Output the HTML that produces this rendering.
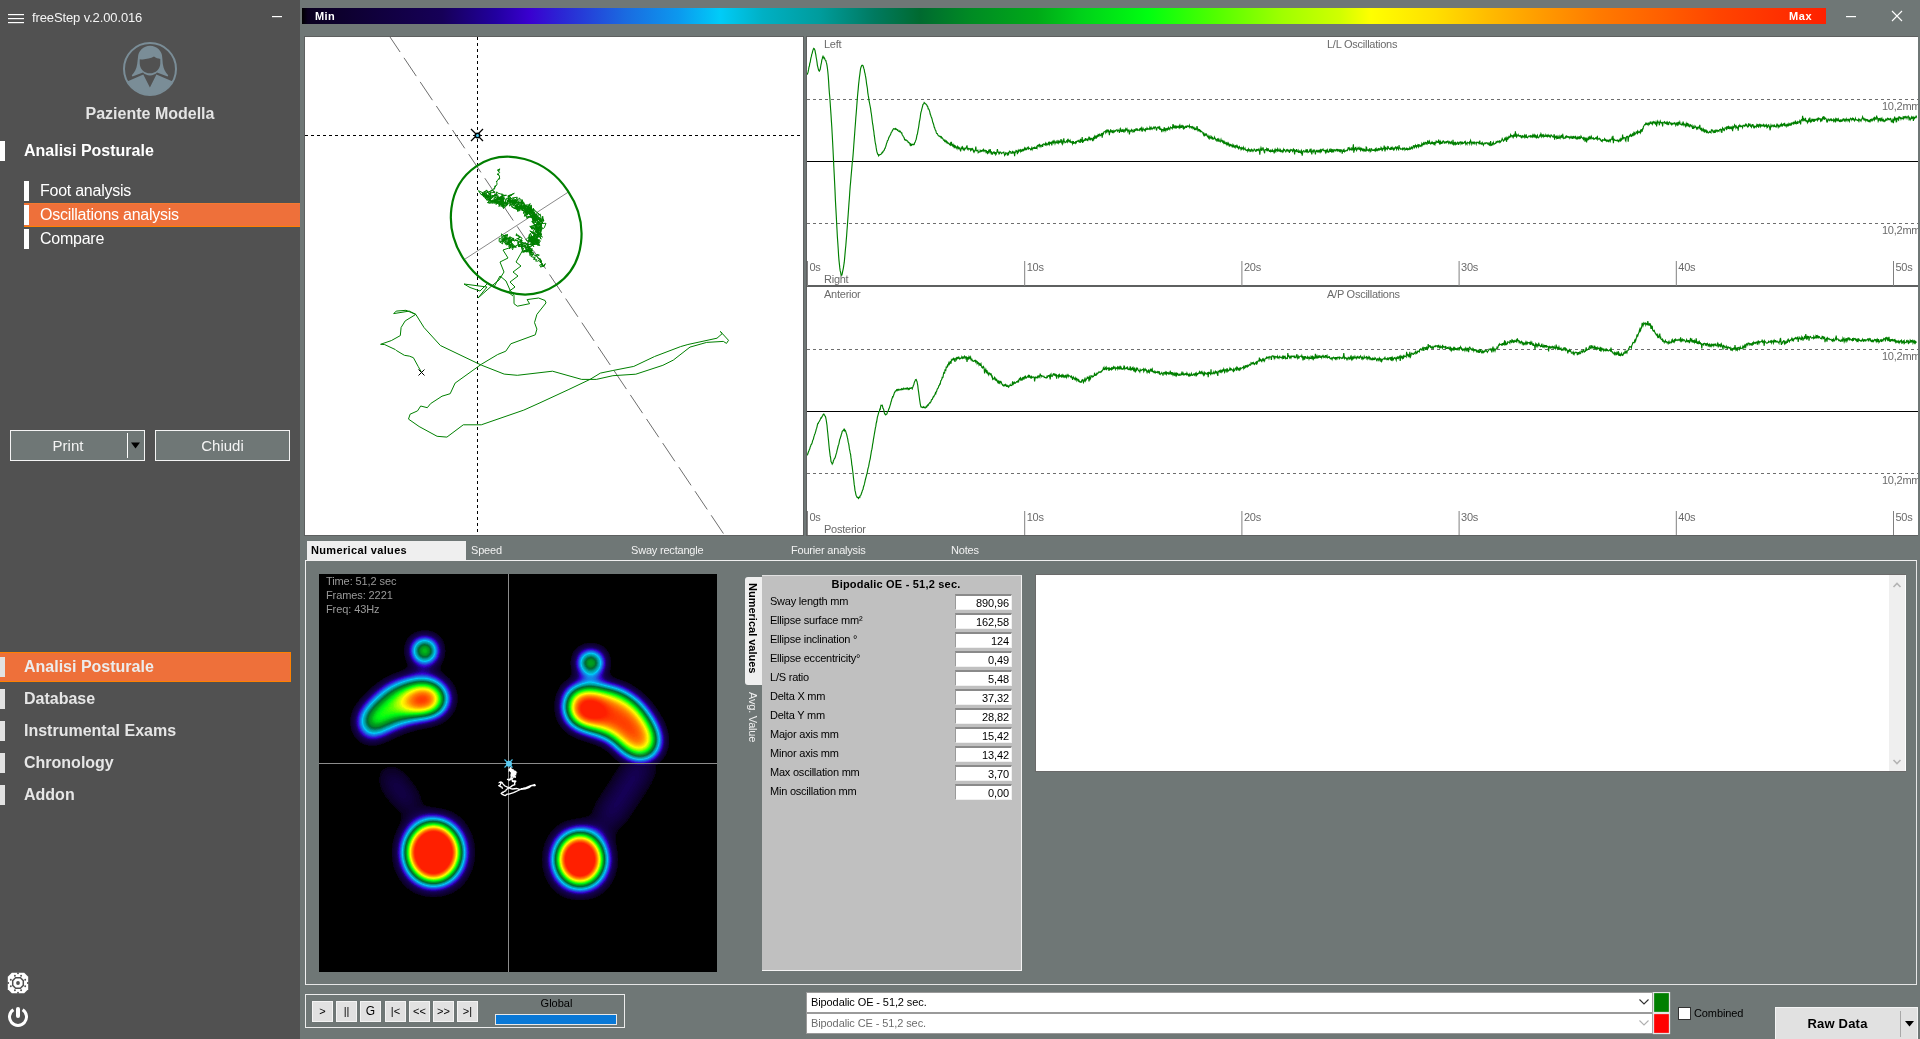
<!DOCTYPE html>
<html><head><meta charset="utf-8">
<style>
*{box-sizing:border-box;margin:0;padding:0}
html,body{width:1920px;height:1039px;overflow:hidden;background:#6f7776;font-family:"Liberation Sans",sans-serif}
.a{position:absolute}
#side{left:0;top:0;width:300px;height:1039px;background:#515151}
.st{color:#fff;white-space:nowrap;line-height:1}
.ct{font-family:"Liberation Sans",sans-serif;font-size:11px;fill:#6a6a6a;letter-spacing:-0.25px}
.tab{font-size:11px;color:#f2f2f2;white-space:nowrap;letter-spacing:-0.2px;line-height:1}
.lbl{font-size:11px;color:#000;white-space:nowrap;letter-spacing:-0.22px;line-height:1}
.vb{position:absolute;left:955px;width:57px;height:16px;background:#fff;border-top:2px solid #8a8a8a;border-left:1px solid #9a9a9a;border-right:1px solid #f0f0f0;border-bottom:1px solid #f0f0f0;font-size:11px;text-align:right;padding-right:2px;line-height:15px;letter-spacing:-0.1px;color:#000}
.pb{position:absolute;top:1001px;width:21px;height:21px;background:#e1e1e1;border:1px solid #f4f4f4;font-size:11px;text-align:center;line-height:19px;color:#000}
</style></head><body>
<!-- sidebar -->
<div id="side" class="a">
  <svg class="a" style="left:0;top:0" width="300" height="1039">
    <rect x="8" y="14" width="16" height="1.2" fill="#fff"/>
    <rect x="8" y="18" width="16" height="1.2" fill="#fff"/>
    <rect x="8" y="22" width="16" height="1.2" fill="#fff"/>
    <rect x="272" y="16" width="10" height="1.2" fill="#fff"/>
    <!-- avatar -->
    <circle cx="150" cy="69" r="26" fill="none" stroke="#7a8d97" stroke-width="2"/>
    <clipPath id="avc"><circle cx="150" cy="69" r="25.8"/></clipPath>
    <g clip-path="url(#avc)" fill="#7a8d97">
      <path d="M116,86.5 L128.4,81 L143.3,74.4 L149.9,87.6 L156.4,74.4 L171.6,81 L184,86.5 L184,100 L116,100 Z"/>
    </g>
    <path fill="#7a8d97" d="M137.9,58 A12.2,12.2 0 0 1 162.3,58 L162.8,64 C163.5,69 165.5,72.5 168.2,75.3 L167.6,76.6 L157,72.6 C155.5,74.5 152.8,75.4 150,75.4 C147.2,75.4 144.5,74.5 143,72.6 L132.4,76.6 L131.8,75.3 C134.5,72.5 136.5,69 137.2,64 Z"/>
    <path fill="#515151" d="M139.7,59.2 C144,59.8 150,59 154,56.6 C156,58 158,58.8 160.3,58.9 L160.3,63.2 C160.3,69 155.7,73.3 150,73.3 C144.3,73.3 139.7,69 139.7,63.2 Z"/>
    <!-- gear -->
    <path fill="#fff" d="M11.8,972.8 L24.2,972.8 L28.2,976.8 L28.2,989.2 L24.2,993.2 L11.8,993.2 L7.8,989.2 L7.8,976.8 Z"/>
    <g fill="#515151"><circle cx="14.9" cy="975.8" r="0.95"/><circle cx="21.1" cy="975.8" r="0.95"/><circle cx="25.2" cy="979.8" r="0.95"/><circle cx="25.2" cy="986.2" r="0.95"/><circle cx="21.1" cy="990.2" r="0.95"/><circle cx="14.9" cy="990.2" r="0.95"/><circle cx="10.8" cy="986.2" r="0.95"/><circle cx="10.8" cy="979.8" r="0.95"/><circle cx="8.2" cy="983" r="0.95"/><circle cx="27.8" cy="983" r="0.95"/><circle cx="18" cy="973.2" r="0.95"/><circle cx="18" cy="992.8" r="0.95"/></g>
    <path d="M15.6,977.7 L20.4,977.7 L23.3,980.6 L23.3,985.4 L20.4,988.3 L15.6,988.3 L12.7,985.4 L12.7,980.6 Z" fill="none" stroke="#515151" stroke-width="1.5"/>
    <circle cx="18" cy="983" r="1.9" fill="#515151"/>
    <!-- power -->
    <g fill="none" stroke="#fff" stroke-width="3">
      <path d="M13.4,1009.8 A8.5,8.5 0 1 0 22.6,1009.8"/>
    </g>
    <line x1="18" y1="1009" x2="18" y2="1016" stroke="#fff" stroke-width="4" stroke-linecap="round"/>
  </svg>
  <div class="a st" style="left:32px;top:11px;font-size:13px;color:#f4f4f4;letter-spacing:-0.12px">freeStep v.2.00.016</div>
  <div class="a st" style="left:0;top:106px;width:300px;text-align:center;font-size:16px;font-weight:bold;color:#e4e4e4;padding-left:0px">Paziente Modella</div>
  <div class="a" style="left:0;top:141px;width:5px;height:20px;background:#fff"></div>
  <div class="a st" style="left:24px;top:143px;font-size:16px;font-weight:bold">Analisi Posturale</div>
  <div class="a" style="left:24px;top:181px;width:5px;height:20px;background:#fff"></div>
  <div class="a st" style="left:40px;top:183px;font-size:16px;letter-spacing:-0.25px">Foot analysis</div>
  <div class="a" style="left:24px;top:203px;width:276px;height:24px;background:#ee703a;border-bottom:1px solid #ff8000;border-top:1px solid #f57a30"></div>
  <div class="a" style="left:24px;top:205px;width:5px;height:20px;background:#fff"></div>
  <div class="a st" style="left:40px;top:207px;font-size:16px;letter-spacing:-0.25px">Oscillations analysis</div>
  <div class="a" style="left:24px;top:229px;width:5px;height:20px;background:#fff"></div>
  <div class="a st" style="left:40px;top:231px;font-size:16px;letter-spacing:-0.25px">Compare</div>

  <div class="a" style="left:10px;top:430px;width:135px;height:31px;border:1px solid #f4f4f4;background:#6f7776"></div>
  <div class="a" style="left:127px;top:433px;width:1px;height:25px;background:#fff"></div>
  <svg class="a" style="left:130px;top:442px" width="12" height="8"><path d="M1,0.5 L10,0.5 L5.5,6.5 Z" fill="#000"/></svg>
  <div class="a st" style="left:10px;top:438px;width:116px;text-align:center;font-size:15px;color:#f4f4f4">Print</div>
  <div class="a" style="left:155px;top:430px;width:135px;height:31px;border:1px solid #f4f4f4;background:#6f7776"></div>
  <div class="a st" style="left:155px;top:438px;width:135px;text-align:center;font-size:15px;color:#f4f4f4">Chiudi</div>

  <div class="a" style="left:0;top:652px;width:291px;height:30px;background:#ee703a;border:1px solid #ff8000;border-left:none"></div>
  <div class="a" style="left:0;top:657px;width:5px;height:20px;background:#e2e2e2"></div>
  <div class="a st" style="left:24px;top:659px;font-size:16px;font-weight:bold;color:#ececec">Analisi Posturale</div>
  <div class="a" style="left:0;top:689px;width:5px;height:20px;background:#e2e2e2"></div>
  <div class="a st" style="left:24px;top:691px;font-size:16px;font-weight:bold;color:#e6e6e6">Database</div>
  <div class="a" style="left:0;top:721px;width:5px;height:20px;background:#e2e2e2"></div>
  <div class="a st" style="left:24px;top:723px;font-size:16px;font-weight:bold;color:#e6e6e6">Instrumental Exams</div>
  <div class="a" style="left:0;top:753px;width:5px;height:20px;background:#e2e2e2"></div>
  <div class="a st" style="left:24px;top:755px;font-size:16px;font-weight:bold;color:#e6e6e6">Chronology</div>
  <div class="a" style="left:0;top:785px;width:5px;height:20px;background:#e2e2e2"></div>
  <div class="a st" style="left:24px;top:787px;font-size:16px;font-weight:bold;color:#e6e6e6">Addon</div>
</div>

<!-- colour bar -->
<div class="a" style="left:302px;top:8px;width:1524px;height:16px;background:linear-gradient(90deg,#000000 0.00%, #0a0020 0.39%, #160058 9.19%, #2200a0 12.73%, #3a00d0 14.96%, #2c24d4 16.93%, #1a6ae0 21.19%, #0c98ee 24.67%, #00ccf8 27.43%, #00b0c4 30.25%, #009c9c 33.99%, #007a60 37.53%, #006a30 40.55%, #008a24 43.77%, #00aa18 48.23%, #00d01a 51.05%, #00ff10 55.51%, #50ff00 59.91%, #a0ff00 64.37%, #d0ff00 68.11%, #ffff00 70.14%, #ffe000 74.34%, #ffbb00 77.89%, #ff9a00 81.43%, #ff7a00 85.17%, #ff6000 89.11%, #ff4400 93.04%, #ff2c00 97.77%, #ff2000 100.00%)"></div>
<div class="a st" style="left:315px;top:11px;font-size:11px;font-weight:bold;letter-spacing:0.4px">Min</div>
<div class="a st" style="left:1789px;top:11px;font-size:11px;font-weight:bold;letter-spacing:0.6px">Max</div>
<svg class="a" style="left:1840px;top:5px" width="80" height="25">
  <rect x="6" y="11" width="10" height="1.2" fill="#fff"/>
  <path d="M52,6 L62,16 M62,6 L52,16" stroke="#fff" stroke-width="1.1"/>
</svg>

<!-- top plots -->
<svg class="a" style="left:0;top:0" width="1920" height="540">
  <rect x="304" y="36" width="500" height="500" fill="#5e6060"/>
  <rect x="806" y="36" width="1112" height="500" fill="#5e6060"/>
  <rect x="807" y="37" width="1111" height="248" fill="#fff"/>
  <rect x="807" y="287" width="1111" height="248" fill="#fff"/>
  <clipPath id="stabclip"><rect x="305" y="37" width="498" height="498"/></clipPath>
  <g clip-path="url(#stabclip)">
<rect x="305" y="37" width="498" height="498" fill="#fff"/>
<line x1="477.5" y1="37" x2="477.5" y2="535" stroke="#000" stroke-dasharray="3 3"/>
<line x1="305" y1="135.5" x2="803" y2="135.5" stroke="#000" stroke-dasharray="3 3"/>
<line x1="390" y1="37" x2="724.4" y2="535" stroke="#6e6e6e" stroke-dasharray="22 7" stroke-dashoffset="3.9"/>
<line x1="464.6" y1="259.3" x2="568.6" y2="191.9" stroke="#8a8a8a"/>
<ellipse cx="516.2" cy="225.6" rx="71.5" ry="62.3" transform="rotate(56 516.2 225.6)" fill="none" stroke="#007f00" stroke-width="2.2"/>
<path d="M421.6,372.5 L418.3,366.7 L413.4,357.7 L409.3,356.1 L404.4,355.3 L396.2,350.4 L395.4,349.6 L384.7,344.6 L380.6,344.3 L391.3,340.6 L400.3,335.6 L401.1,327.5 L405.2,320.9 L415.8,314.4 L409.3,311.1 L393.7,313.6 L396.2,311.1 L406,310.3 L415.8,314.4 L424,327.5 L440.4,345.5 L481.3,365.1 L504.2,374.1 L517.3,375.3 L552.5,371.2 L581.7,379.4 L596.3,379.4 L612.9,375.7 L635.8,374.2 L662.9,365.3 L673.3,360.1 L690,347.1 L706.7,342.4 L723.3,341.4 L726.5,343.4 L728.5,340.3 L722.3,333.5 L720.2,331.5 L722.3,333.5 L717,338.2 L687.9,344.5 L680.6,346.6 L654.6,356.5 L633.8,366.4 L612.9,370.5 L600.4,373.1 L590,379.4 L568.1,389.8 L540,402.8 L523.8,410.1 L481.3,424.8 L463.3,424.8 L446.9,437.1 L437.1,436.3 L419.1,426.5 L408.5,419.1 L410.1,414.2 L417.5,410.9 L420.7,406 L427.3,407.7 L430.6,403.6 L442,396.2 L450.2,393.7 L455.1,383.1 L481.3,364.3 L497.7,354.5 L505.8,351.2 L510.8,343.8 L535.3,334.8 L536.9,329.1 L534.5,322.6 L536.9,314.4 L546,302.9 L545.1,300.5 L538.6,298 L527.1,299.6 L529.6,303.7 L517.3,306.2 L514,303.7 L514,295.5 L510,290 L506,281 L500,276 L494,287 L488,283 L480,291 L470,287.5 L464,284 L487,287 L478,298 L491,286.5 L499,280 L504,272 L500,262 L508,258 L503,250 L512,247" fill="none" stroke="#008000" stroke-width="1"/>
<path d="M498.6,169.9 L498.6,170.8 L497.3,170.2 L498.9,169.3 L499.9,168.9 L498.5,171.4 L498.9,172 L498.9,171.5 L499.7,172.6 L498.3,173.4 L497.1,174.3 L498.9,175 L498.3,174.9 L498.3,174.1 L499.5,176.1 L499.5,178.1 L499.8,178.8 L498.5,179.3 L499.2,178.4 L498.2,179.3 L496.8,181.3 L496.9,181.8 L496.4,181 L496.6,182.3 L497,182.8 L496.9,184.5 L497,185 L496.2,185.4 L495.9,185.1 L495.3,187.2 L495,186.6 L494.7,186.3 L494.6,188.4 L494.9,188.9 L494.8,188.8 L494,188.8 L493.9,188.2 L494,189.4 L493.7,189.7 L493.5,189.7 L487.4,192.5 L485.5,194.2 L484.5,191.1 L481.3,194.8 L478.4,190.7 L483.1,192.9 L482.2,194.4 L483.6,195.9 L481.9,194.4 L484.2,195.8 L486.7,194.2 L487.3,198.2 L488.4,199.3 L490.6,197.9 L489,196.9 L483.5,196.7 L483.7,195.6 L485.2,194.1 L481.3,194.7 L485.1,193.2 L483.4,196.3 L487,195.4 L488.4,198.7 L491.1,199.9 L490.1,201.2 L487.8,198.6 L489.5,195.9 L487.7,197.3 L483,194.1 L488,192.1 L486.5,189.9 L482.8,195.4 L486.1,196.4 L486.4,194 L485.8,198.3 L488.7,196 L487.5,195.2 L489.5,196.6 L484.5,197.6 L488.7,201.1 L490.3,196.9 L488.4,195.7 L486.2,194.8 L486.1,198.1 L486.5,200.1 L488,199.4 L490.3,199 L495.2,194.1 L493.3,196.2 L489.9,196.4 L490.7,192.6 L490,193.3 L488.7,194.4 L490.5,192.4 L491.4,190 L495.2,192.2 L490.2,193 L489.8,193.1 L486.1,190.4 L489.6,194.7 L494.6,196 L490.8,198.9 L490.2,193.6 L487.9,196 L490.6,194 L489.8,198.1 L496.3,194.4 L497.9,198.3 L496.5,198.2 L494.7,197.1 L495.1,203.5 L495,198.8 L495.8,202.9 L495.6,201.8 L489.9,200.2 L489.8,199.1 L491,202.7 L488.8,203.2 L488.5,201.9 L490.1,200.5 L487.4,202.6 L492.2,203 L491.7,201.1 L497.9,199.5 L490.9,201.8 L498.5,202.6 L499.6,202.8 L492.7,203 L492.2,203.2 L495.9,200 L491.9,202 L493.5,198.8 L496.9,199.8 L498,198.1 L496.7,195.9 L495.9,194.8 L494.9,197 L499.2,199.3 L500.7,196.9 L498.7,199.6 L497.7,194.6 L495.8,195.8 L496.8,191.8 L497.4,193 L501.8,194.3 L502.7,197.6 L499.2,199.5 L500,197.3 L498.1,197.1 L503.3,199.1 L502.2,199.2 L501.5,201.1 L500.3,204.4 L501.7,202.1 L501.6,200.4 L501.4,198.9 L502.2,196.5 L495.7,199.2 L497.7,202.9 L501.5,195.8 L498.6,199.9 L503.6,200.1 L501.8,193.8 L503.5,194.9 L503.2,194.8 L501.4,198.3 L496.2,201.5 L499.9,201.5 L498.6,202.2 L503,199 L498.1,202.6 L495.8,204.3 L500,202.3 L499.7,202.5 L496.1,203 L497.1,201 L497.8,198.7 L501.3,198.4 L500.7,199.9 L500.5,197.7 L502.9,196 L503.1,195.7 L506.5,195.3 L504.1,195.3 L503.5,198.1 L502.9,199.6 L503,199.6 L502.8,205 L502.8,205.2 L498.8,203.6 L498.6,202.3 L504.3,205.2 L504,201.9 L502,199.9 L504.3,197.7 L503,201.1 L501.2,200.9 L500.6,200.8 L502.3,201.1 L503.3,200.3 L500.6,198.2 L501.4,198.1 L501.6,200.8 L502.9,201.7 L500.5,202.7 L499.1,200.7 L504.3,205.7 L502.8,202.9 L502.5,202.9 L502.9,204.6 L503,207.2 L502,204.8 L503.5,208.6 L503,202.9 L507.4,205.1 L507.9,203.7 L504.8,207.6 L501.6,201.8 L503.1,202.2 L502.1,203.1 L499,206.6 L500,202.3 L501.4,200 L504.9,202.4 L501.1,206.7 L501.9,203.3 L498.6,203.9 L499.3,205.6 L501.9,203.9 L502.7,201.9 L499.5,198.1 L505.2,198.9 L506.1,205.9 L502.8,204.9 L502.9,202.6 L503.2,202.7 L504.3,202.4 L507.3,204 L504.6,202.8 L508.2,203.7 L505.6,202.3 L507.1,204.8 L507.4,200.5 L508.9,200.6 L510.5,202.7 L508.2,203.3 L506.3,198.4 L510.1,198.3 L509.5,202.7 L512.2,207 L512.4,207.2 L511.6,207 L513.8,204.7 L514.7,203 L515.4,201.1 L513.7,199.6 L511.2,202.3 L508.1,199.4 L507,202.2 L511.3,200.9 L509.1,195.3 L511.6,195.4 L507.9,196.8 L514.3,193.3 L509.1,195.5 L508.6,201 L508.1,195.4 L513.7,200.4 L512.5,202.4 L513.2,202.4 L509.5,206 L510.6,201.9 L507.8,201.7 L515,200 L512.4,204.8 L510.4,204.6 L512.4,201.5 L513.1,202.4 L516.9,198.4 L518,199.7 L512.2,202.4 L513.6,204.3 L515.3,201.1 L512,204.1 L513.8,202.5 L511.3,200.3 L513.6,206 L519.7,204.3 L520.3,206.5 L518.1,206.5 L521.1,206.1 L520.9,199.5 L519,197.9 L519,203.8 L516.3,201 L513.1,200.1 L511.3,200.2 L511.1,202.2 L510.6,201.5 L509.4,199.3 L508.7,200.1 L514.5,200.6 L510,200.2 L511.7,202.4 L515.2,205 L515,208.9 L517.3,207.1 L515,206.2 L517.8,205.8 L516.8,205.5 L517.6,205.7 L518.6,201.7 L518.3,201.2 L512.3,198 L517.3,197.2 L516.6,198.6 L517.2,198.9 L516,203.6 L513.8,202.1 L515,201.8 L518.4,206.7 L515.7,206.4 L515.2,206.7 L515.3,206.8 L519.8,207.8 L518,206.1 L517.7,204.1 L519.7,202.9 L522.9,201.5 L522,199.5 L521,203.4 L515.8,201.3 L521.4,207.3 L518.3,207 L517,206.1 L518,209.6 L516.8,206.5 L515.1,202.7 L519.8,202.5 L515.4,205.9 L520,208.3 L519,208.2 L518.1,206.4 L517.1,208.8 L512.4,207.4 L518.4,210.1 L515.8,206.9 L514.9,207.2 L518.8,206.5 L521.3,210.1 L523.3,209 L520.6,207.4 L516.7,207.5 L517.9,211.7 L518.9,206.8 L521.6,204.3 L521.8,208.4 L524.1,205.4 L528.1,206.4 L530.1,203.5 L527.6,209.8 L525,210.2 L523.7,205.7 L526.6,209.5 L519.5,206.5 L520,210.8 L518.5,210.4 L524.8,204.3 L521.7,202.2 L521.4,207.8 L520.4,206.4 L526.9,205.8 L524.8,208.7 L522.7,209 L525.5,206.1 L523.2,206.5 L523.4,206.9 L521.5,209.8 L525,212.1 L521,207.7 L521.1,207.2 L521.7,205.7 L523.4,204.8 L522.5,201.4 L520.7,204.8 L524.6,209.1 L519.8,208.1 L523.5,201.9 L525.4,206.6 L528.6,206.5 L528.2,206.2 L530.9,207.8 L529.8,204.9 L523.2,205.1 L524.5,206.6 L523.1,206.5 L522.3,209.7 L525.8,212.5 L524.3,208.1 L526.4,208.8 L525.3,207.2 L524.3,208.9 L525.3,213.3 L528.5,209.7 L532.2,212.2 L525.8,210.4 L526.2,210.8 L527.6,215.2 L526.2,210.7 L529.3,211.9 L530.8,209.4 L525.7,205.9 L529.5,209.9 L529.6,206.9 L525.5,212.2 L529.7,214.4 L531.6,214.9 L527,212 L527.8,207.3 L528.3,205.9 L531,209.7 L527,209.2 L531.2,208.2 L531.5,211.4 L531.1,204.9 L532.1,212.1 L531.4,212.2 L531.4,207.9 L530.6,212.8 L532.1,210.1 L528.1,209.8 L533.2,213.4 L527.8,208.4 L529.5,208.3 L530.9,211.3 L528.8,211.2 L529.5,214.5 L533,216.5 L534,213.6 L534,215.5 L527.8,217.6 L527.1,218.6 L526.1,215.4 L523,212.8 L526.7,211.2 L529,208.5 L532.8,211.4 L532.4,210.7 L533,209.2 L535.2,211.7 L532.5,214.8 L530.1,211.7 L527.7,206.8 L525.1,209.4 L528.5,208.2 L529.6,208.4 L532.7,209.8 L532.6,211.8 L525.9,211.6 L524.4,216.2 L528.2,212.6 L523.3,208.1 L528.2,207.9 L525.8,210.7 L526.7,214 L525.3,216.3 L527.9,213.3 L530.8,213 L530.7,211.8 L527.5,212.4 L531.4,207 L529.9,211.1 L532.9,210.2 L533.9,215.8 L532.4,211.4 L530,212.3 L536,215.7 L533.8,212.9 L532,218.4 L533.5,217.1 L532.6,220.5 L537.8,220.7 L532.5,218.1 L534.9,218.5 L534.2,220.9 L535.1,220 L533.5,214.8 L535.2,214.4 L533.2,217.3 L536.9,217.8 L535.2,218.1 L535.5,216 L530.4,217.4 L534.4,217.4 L532.9,215.1 L537.4,213.9 L539.8,214.6 L534.8,210.5 L533.1,208.1 L533.8,211.1 L532.9,215.1 L527,217.1 L531.2,216.5 L530.1,214.7 L531,210.8 L528.9,212.4 L532.9,212.3 L534.9,214 L533.7,214.5 L535.3,219.8 L533.3,220.7 L534,215.2 L533.5,219.3 L534.7,219.3 L532.3,217.1 L536,219 L537,219.5 L535.4,222.6 L536.1,217 L536,220.5 L535.5,219.6 L534.9,219.3 L539.2,222 L534.7,218.5 L536.2,213.8 L539.5,220.3 L537.2,216.3 L534.8,219.3 L535.4,216.9 L539.7,217.6 L542.3,219.9 L542.7,216.2 L543.4,221.5 L541.8,223 L539.8,221.1 L538.2,218.2 L541.4,221 L544,220.4 L543.3,219.2 L536.6,224.5 L541.7,225.2 L540.4,221.1 L541.1,219.7 L541.6,221.4 L542.8,221.2 L536.9,215.5 L535.5,215.6 L533.8,219.5 L541.2,218.8 L540.3,214.2 L538.3,216 L531.9,217.7 L540.1,219.9 L535.8,219.9 L539.5,222.5 L536.9,223 L536.2,223.6 L541.3,224.8 L537.8,223.9 L540.1,220 L539.7,218.5 L541.9,222.1 L543.1,223.2 L538.2,218.4 L532.7,220.1 L531.9,214.5 L536.2,222.6 L537.6,222.9 L536.7,226.2 L534.7,229.2 L535.6,225.1 L534.5,227.2 L537.1,228.7 L535.4,226.7 L537.6,224.5 L534.2,224.7 L535.5,226.4 L532.7,220.9 L532,222 L531.9,221.3 L533.4,222.3 L534.3,220.2 L535.1,222.8 L532.4,222.5 L534.3,224.6 L535.5,224.8 L530.2,226.5 L532.1,229.4 L531.3,227.2 L534,227 L529.8,226.4 L536.6,229.7 L536.7,225.9 L537.2,224.1 L534.7,225 L540.2,228.2 L541.4,225 L538,227.8 L538.8,229.1 L536.2,229.5 L539.1,229.5 L535.6,231 L533.9,227.5 L531.1,228.4 L539.1,229.6 L535.6,225.7 L536,225.9 L541.3,223.3 L537.2,230 L539.3,228 L537.6,221.7 L540.7,223.7 L537.4,222.9 L538.3,222 L540.7,223.9 L541.7,226.9 L539.6,226.4 L543.5,228.5 L544.1,227.7 L544.3,227.7 L546,223.3 L538.9,223.6 L541.1,224.5 L538.2,231.3 L537.3,231.5 L540.4,226.4 L539.5,226.2 L540.1,227.5 L540.5,223.9 L540.7,228.8 L542.6,228.7 L540.7,229.5 L540.3,229 L541.1,230.4 L540.7,232.4 L541.4,228.8 L536.4,232.6 L542.5,237 L539.2,233.8 L537.3,232.2 L535,231.2 L537.7,232.8 L541.1,234.2 L540.3,230.5 L539.7,226.5 L540.4,228.6 L537,227 L538.2,231.1 L538.4,226.7 L539.1,232.9 L536.1,231.9 L540.1,232.1 L541.2,229.2 L538.3,230.8 L537.2,230 L535.9,231.5 L539,237 L541.4,235.1 L538.3,231.7 L538.5,237.1 L537,236.7 L539.8,233.7 L541.8,234.2 L539.1,236.3 L541.1,239.2 L539.4,234 L540.5,231.5 L535.9,228 L535.8,226.8 L532.2,233.1 L535.4,234.1 L539.5,236.6 L535.2,234.5 L534.8,232.1 L531,232.5 L534.9,234.4 L529.8,230.9 L534,232.9 L533.5,236.2 L535.8,236.3 L533.5,236.8 L535.2,238.9 L537.9,235.2 L537.7,232 L534.7,233.3 L535.1,235.3 L537.9,237.5 L534.7,235 L541.1,233.6 L538.5,234.2 L534.2,236.1 L533.9,239.8 L536.8,239.3 L536.8,242.1 L536.1,241.7 L537.2,241.7 L539.2,240 L540.5,240.9 L538.2,243.5 L535.7,238.5 L537.8,239.8 L539.2,242.3 L532.5,243.2 L528.8,239.9 L529.4,234.4 L528.9,239 L533.5,237.4 L528.5,240.5 L531.6,241.8 L532.5,236.6 L531.8,240.4 L532.9,240.2 L538.9,240.5 L536.7,241.2 L530.8,237.8 L532.5,238.7 L530.2,237.5 L529.5,237.4 L529.2,237.9 L535.6,235.1 L534.4,237.4 L532.2,237 L530.3,233.1 L529.6,240.4 L533.4,239.8 L531.2,236 L534.2,239.2 L534,237.4 L533,239 L535.4,242.6 L533.1,240.4 L535.6,238.8 L535.2,241 L535.1,243.3 L536,242.4 L538,245.6 L539.2,242.9 L538.7,240.5 L536.1,237.6 L535.3,239.8 L538.5,239.9 L536.9,238.1 L533.7,238.9 L538.3,237.1 L534.2,238.1 L534.2,238.8 L531.5,241.6 L532,241.1 L527.9,241.3 L530.2,238.8 L533.4,242 L533,238.5 L537.1,239.6 L535.6,242.3 L539.6,240.1 L532.1,240.7 L538,243.6 L531.4,245.1 L534.5,240.8 L531.7,243.7 L532.7,238.9 L530.2,238.6 L528.9,239.8 L531.2,237.4 L530.2,240.4 L534.4,244.4 L535.2,240.8 L531.8,238.1 L535.7,242.4 L534.6,240.1 L532.9,243.6 L535.1,243.7 L539.8,245.6 L538.2,242.5 L537.3,243.5 L533.7,244.6 L531.9,245.4 L529.9,244.2 L530.4,244.1 L531.7,242.2 L530,242.1 L525.8,239.8 L528.1,237.4 L533,236.5 L531.4,239.7 L531.1,240.1 L532.1,237.9 L529.7,240.4 L527.1,244.2 L527.9,245 L525.9,248.5 L525.9,249.1 L524.6,243.3 L525.5,243.6 L521.8,242.5 L523.6,243 L521.1,246.9 L527.7,244.4 L531.1,244.8 L532.2,245.2 L533.9,246.8 L531.9,243.8 L532.9,241.4 L532,244.2 L534.1,244 L532.2,246 L531.7,246.3 L529,246.6 L528.2,249.7 L529,248.7 L525.8,242.9 L524.7,242.6 L527.7,244.5 L530.5,248.8 L526.8,247.4 L527,247.6 L529.6,247.5 L531.4,249.7 L531.3,252.1 L526.8,251.7 L529.8,247.1 L531.5,250.9 L531.9,248.3 L531.8,251.1 L527.3,249 L529.8,250.7 L532.7,250.3 L527.2,251.3 L527.3,251.2 L524.3,251.9 L525.1,250.2 L522.3,252 L524.2,252.1 L525.9,249.3 L529.8,248.7 L529,250.4 L523.7,251.8 L522.6,251.4 L521.3,246.7 L525,246.2 L527.1,247.6 L529.7,246.7 L527,246.6 L526.5,250.3 L529.4,250.2 L529.8,249.4 L531,251.4 L529.9,251 L529.1,251.4 L530,254.4 L531,253.9 L532.4,254.5 L529.9,255.1 L529.8,255.4 L530.1,253.7 L531.5,252.1 L532.3,251.8 L531.9,254.3 L533.5,254.3 L535.6,256.1 L535.3,255.6 L536.2,256.2 L535.4,255.4 L537.4,254.5 L537.8,255.4 L539.3,255.1 L537,254.7 L536.1,255.8 L537.6,257 L538.1,258.6 L540.4,258.8 L541,260.9 L541.6,261.3 L539.6,261.7 L540.3,260.7 L540.5,262.8 L540.8,262.3 L541.9,263.8 L541.9,264.3 L539.6,265.1 L540.3,266.1 L540.7,267.2 L543.1,265.8 L543.8,265.7 L545.3,263.6 L544.1,266.3 L542.8,266.4 L542.1,266.4 L541.9,266.3 L542.4,263.9 L542.1,264 L541.7,265.3 L543.4,266 L541.5,263.2 L541.3,262.4 L541.6,262 L540.7,260 L540.1,259.3 L537.7,261.3 L537.5,261 L535.6,261.1 L536.7,259.6 L535.1,259.2 L534,257.6 L534,260 L535.1,257.3 L532,257 L530.7,256 L532.3,256 L532.6,255.5 L532.6,254.5 L531.6,255.1 L533.6,254.3 L533.6,252.7 L530.4,252.8 L531.4,253.1 L531.5,252.6 L529.8,251 L531.3,251.3 L530.5,253.2 L530.3,251.5 L528.1,249.9 L526.4,249.5 L526.4,252.1 L527.2,251.5 L526,250.1 L527.4,252 L526.7,250.4 L525.5,250.4 L523,251.2 L520.5,240 L522.2,240.4 L522.1,241.4 L521.1,240.8 L521.4,240 L520.9,241.4 L518.2,238.2 L520.4,237 L517.8,234.8 L516.1,235.8 L516.5,233.7 L516.5,234.5 L516.7,234.7 L518.2,236.7 L519.6,236.6 L522.2,238.2 L519.3,241.7 L515.4,239.9 L516.6,238.7 L519,238.4 L517.3,240.9 L512.7,239.8 L510.9,240.2 L511.2,240.7 L511.8,241.3 L509.1,241 L512.8,239.7 L514.3,241.3 L513.2,238.3 L513.2,238.1 L509.9,240.8 L511.4,241.9 L509,240.4 L508.3,240.2 L510.8,237.4 L514.1,238.9 L512,240.6 L511.3,238.7 L508.9,237.6 L508.7,240.4 L508.3,243.6 L510.2,245.3 L508.7,243.2 L509,240.1 L511.2,239.8 L511.9,240.1 L510.4,241 L509.1,237.1 L510.4,236.8 L509.9,238.3 L505.1,237.8 L507.5,234.4 L506.6,239.4 L506.9,240.2 L508.8,242.9 L509.4,240.6 L505.4,238.9 L509.5,238.7 L504.6,238.4 L503.6,235.6 L507.5,235 L505,235 L506.4,237.5 L505.2,237.4 L501.5,233.8 L502,237.4 L501.9,237.7 L503.6,235.4 L505,235.8 L505.4,239.9 L501.9,240.6 L504.9,238.9 L503.4,239.9 L503.3,242.2 L505.1,240.2 L505.3,238 L503.4,240.2 L504.7,240.2 L505.7,238.2 L501.6,237.8 L503.7,240.4 L504.7,240.5 L500.2,241.3 L502.7,241.2 L502.5,241 L502.1,241.8 L502.7,243.9 L499.1,241.5 L499.3,238.2 L503.5,240.1 L503.4,238.2 L505.7,241 L505.6,241.5 L503.1,240.1 L503.4,241.2 L504.1,242.5 L506.9,244.2 L504.7,242.3 L506.3,240.5 L506.5,241 L505.3,244.2 L506.7,243.9 L509.4,242.7 L506.7,242.3 L506.6,244.2 L508.6,240.8 L511.4,241.3 L508.5,244.7 L510.3,245.6 L508.6,246.3 L510.6,245.3 L508.5,245.2 L511.6,240.4 L506.8,245.1 L511.3,241.9 L512.1,244.9 L511.8,243 L508.4,242.9 L509.9,241.2 L513.5,244.9 L511.8,244.8 L510.8,244.1 L509.6,248.9 L509.9,246.4 L511.1,246.3 L511.4,246.5 L516.5,247 L512,246.1 L509.4,244.4 L515.3,246.5 L513.2,247.7 L512.6,249.8 L512,248.2 L514.1,245.4 L515.3,247.4 L515.8,245.6 L517.9,245.1 L518.1,244.2 L518.4,242 L521.2,242.3 L521,239.6 L521.3,243.5 L518.3,246.1 L518.9,245.6 L518.6,246.3 L518,246.6 L520.4,246.4 L522.4,247.3 L518.5,245 L520.1,244.1 L523,245.1 L522.9,242.5 L519.4,245.6 L517.9,241.7 L518.2,245.1 L519.7,246.6 L523.2,244 L521.9,246.2 L522.4,246.2 L525.3,245.5 L520,255 L516,262 L521,266 L513,272 L518,276 L510,282 L515,287 L508,292 L513,296" fill="none" stroke="#008000" stroke-width="1" stroke-linejoin="bevel"/>
<path d="M418.5,369.5 L424.5,375.5 M424.5,369.5 L418.5,375.5" stroke="#000" stroke-width="1"/>
<path d="M471,129 L483,141 M483,129 L471,141" stroke="#000" stroke-width="1.3"/>
<circle cx="477.5" cy="135.5" r="3" fill="#000"/><circle cx="477.5" cy="135.5" r="1.5" fill="#4cc8f0"/>
  </g>
  <clipPath id="chclip"><rect x="807" y="37" width="1111" height="498"/></clipPath>
  <g clip-path="url(#chclip)">
<line x1="807" y1="99.5" x2="1918" y2="99.5" stroke="#6e6e6e" stroke-dasharray="3 3"/>
<line x1="807" y1="223.5" x2="1918" y2="223.5" stroke="#6e6e6e" stroke-dasharray="3 3"/>
<line x1="807" y1="161.5" x2="1918" y2="161.5" stroke="#000" stroke-width="1"/>
<line x1="807.5" y1="261" x2="807.5" y2="286" stroke="#808080"/>
<text x="809.5" y="271" class="ct">0s</text>
<line x1="1024.7" y1="261" x2="1024.7" y2="286" stroke="#808080"/>
<text x="1026.7" y="271" class="ct">10s</text>
<line x1="1241.9" y1="261" x2="1241.9" y2="286" stroke="#808080"/>
<text x="1243.9" y="271" class="ct">20s</text>
<line x1="1459.1" y1="261" x2="1459.1" y2="286" stroke="#808080"/>
<text x="1461.1" y="271" class="ct">30s</text>
<line x1="1676.3" y1="261" x2="1676.3" y2="286" stroke="#808080"/>
<text x="1678.3" y="271" class="ct">40s</text>
<line x1="1893.5" y1="261" x2="1893.5" y2="286" stroke="#808080"/>
<text x="1895.5" y="271" class="ct">50s</text>
<text x="1882" y="110" class="ct">10,2mm</text>
<text x="1882" y="234" class="ct">10,2mm</text>
<text x="824" y="48" class="ct">Left</text>
<text x="824" y="283" class="ct">Right</text>
<text x="1327" y="48" class="ct">L/L Oscillations</text>
<path d="M807,74.7 L807.4,73.8 L807.8,73 L808.2,71.4 L808.6,69.4 L809,67 L809.4,66 L809.8,63.2 L810.2,62.3 L810.6,59.7 L811,57.7 L811.4,56.4 L811.8,54.1 L812.2,53.2 L812.6,51.3 L813,50.1 L813.4,49 L813.8,48.4 L814.2,48.7 L814.6,49.4 L815,50.3 L815.4,52.8 L815.8,54.7 L816.2,57.5 L816.6,59.5 L817,62.2 L817.4,65.3 L817.8,66.9 L818.2,68.6 L818.6,70.1 L819,70.8 L819.4,71.1 L819.8,70.1 L820.2,69.4 L820.6,67 L821,64.5 L821.4,62.9 L821.8,60.2 L822.2,58.9 L822.6,57.3 L823,56.4 L823.4,57.6 L823.8,57.3 L824.2,58.6 L824.6,58.3 L825,59.4 L825.4,60.3 L825.8,60.5 L826.2,62.2 L826.6,63.3 L827,65.3 L827.4,68.2 L827.8,71.5 L828.2,75.7 L828.6,81.1 L829,87.9 L829.4,93.3 L829.8,97.2 L830.2,103.3 L830.6,109.1 L831,114.6 L831.4,121.1 L831.8,127 L832.2,134.3 L832.6,141.8 L833,149.5 L833.4,157.6 L833.8,166.2 L834.2,173.9 L834.6,182.3 L835,190.4 L835.4,199.9 L835.8,207.4 L836.2,214.5 L836.6,222.2 L837,229.7 L837.4,237.2 L837.8,242.8 L838.2,248.8 L838.6,255.5 L839,260.4 L839.4,264.1 L839.8,267.9 L840.2,270.9 L840.6,272.2 L841,274.6 L841.4,275.1 L841.8,275.1 L842.2,273.8 L842.6,271.7 L843,269.8 L843.4,267.8 L843.8,265.1 L844.2,262.7 L844.6,258.6 L845,254.1 L845.4,249.5 L845.8,245.8 L846.2,240.6 L846.6,236 L847,230.2 L847.4,225.3 L847.8,219.6 L848.2,214.2 L848.6,208.6 L849,202.9 L849.4,198 L849.8,191.8 L850.2,186.3 L850.6,182.3 L851,177.2 L851.4,172.8 L851.8,168.1 L852.2,163.2 L852.6,160.4 L853,155.9 L853.4,150.7 L853.8,145 L854.2,139.6 L854.6,134.5 L855,128.8 L855.4,123.8 L855.8,118 L856.2,113.4 L856.6,108.3 L857,102.9 L857.4,97.5 L857.8,93.1 L858.2,89.1 L858.6,84.4 L859,81 L859.4,77.4 L859.8,74.6 L860.2,71.4 L860.6,68.6 L861,67.3 L861.4,66.3 L861.8,65.4 L862.2,65.2 L862.6,65.4 L863,65.7 L863.4,67 L863.8,68.4 L864.2,69.5 L864.6,72.1 L865,73.4 L865.4,75.7 L865.8,77.6 L866.2,80.5 L866.6,83.8 L867,86.2 L867.4,88.5 L867.8,92.6 L868.2,95.2 L868.6,97.3 L869,100.7 L869.4,102.3 L869.8,104.5 L870.2,106.5 L870.6,108.7 L871,111.8 L871.4,114 L871.8,117.2 L872.2,120.5 L872.6,123.7 L873,125.7 L873.4,129.1 L873.8,131.3 L874.2,135.2 L874.6,137.7 L875,141 L875.4,143.5 L875.8,145 L876.2,147.9 L876.6,150.3 L877,152 L877.4,153.3 L877.8,154.3 L878.2,154.6 L878.6,155.7 L879,154.8 L879.4,155.1 L879.8,154.8 L880.2,154.5 L880.6,154.4 L881,154.3 L881.4,153.8 L881.8,153.1 L882.2,152.4 L882.6,152.7 L883,151.7 L883.4,150.9 L883.8,150.7 L884.2,150.2 L884.6,148.8 L885,148.6 L885.4,147.3 L885.8,146.2 L886.2,144.8 L886.6,143.2 L887,142.6 L887.4,140.9 L887.8,140.5 L888.2,139.7 L888.6,138.1 L889,137.4 L889.4,136.3 L889.8,136 L890.2,135.1 L890.6,134.6 L891,133.1 L891.4,132.2 L891.8,131.8 L892.2,131.1 L892.6,130.1 L893,129.8 L893.4,128.8 L893.8,128.6 L894.2,128.8 L894.6,129 L895,129.3 L895.4,128.5 L895.8,128.6 L896.2,129.4 L896.6,129.4 L897,129.7 L897.4,130.3 L897.8,129.9 L898.2,130.6 L898.6,131.1 L899,131.5 L899.4,131.7 L899.8,130.9 L900.2,131.4 L900.6,132 L901,132.3 L901.4,133.1 L901.8,133 L902.2,134.8 L902.6,135.3 L903,135.7 L903.4,136.8 L903.8,137.2 L904.2,138 L904.6,139.7 L905,139.5 L905.4,140 L905.8,140.3 L906.2,140 L906.6,140.3 L907,140.9 L907.4,140.9 L907.8,141.3 L908.2,142.3 L908.6,142.3 L909,142.9 L909.4,142.8 L909.8,143.5 L910.2,145 L910.6,144.2 L911,145.2 L911.4,144.5 L911.8,145.2 L912.2,144.6 L912.6,144.3 L913,144.1 L913.4,144.6 L913.8,144.8 L914.2,144.4 L914.6,142.8 L915,142.4 L915.4,141.4 L915.8,140.1 L916.2,139.2 L916.6,137.2 L917,135 L917.4,134.1 L917.8,131.7 L918.2,129.3 L918.6,127.5 L919,124.7 L919.4,121.6 L919.8,119.8 L920.2,117.5 L920.6,114.2 L921,112.1 L921.4,110.9 L921.8,109.2 L922.2,107.7 L922.6,106.1 L923,104.4 L923.4,104.1 L923.8,103.8 L924.2,102.6 L924.6,103 L925,103.2 L925.4,103.8 L925.8,103.9 L926.2,104.4 L926.6,105.1 L927,105.2 L927.4,106.6 L927.8,106.7 L928.2,108.9 L928.6,108.8 L929,109.6 L929.4,110.6 L929.8,111.9 L930.2,114 L930.6,114.9 L931,116.2 L931.4,117.2 L931.8,118.2 L932.2,119.7 L932.6,121.6 L933,122.7 L933.4,123.8 L933.8,125.2 L934.2,127.2 L934.6,127.5 L935,129.1 L935.4,130.1 L935.8,130.5 L936.2,132.4 L936.6,133.4 L937,133.7 L937.4,133.6 L937.8,134.7 L938.2,135.4 L938.6,135.9 L939,135.9 L939.4,136.2 L939.8,136.6 L940.2,136.4 L940.6,136.5 L941,137.5 L941.4,136.9 L941.8,138 L942.2,137.9 L942.6,138.1 L943,138.9 L943.4,139.8 L943.8,140.2 L944.2,140 L944.6,141.1 L945,140.4 L945.4,141.4 L945.8,141.1 L946.2,142.3 L946.6,141.3 L947,142 L947.4,142.1 L947.8,143.3 L948.2,142.9 L948.6,143.5 L949,143.8 L949.4,144.4 L949.8,144.7 L950.2,143.5 L950.6,144.9 L951,144.1 L951.4,141.9 L951.8,145.8 L952.2,144 L952.6,145.5 L953,144.8 L953.4,147.2 L953.8,144.6 L954.2,146.9 L954.6,146.1 L955,147.3 L955.4,146.1 L955.8,146.6 L956.2,147.6 L956.6,147.4 L957,148.6 L957.4,146.5 L957.8,147.2 L958.2,148 L958.6,147.4 L959,148.9 L959.4,148.6 L959.8,148 L960.2,149.6 L960.6,151.5 L961,148.9 L961.4,148.2 L961.8,147.4 L962.2,149.2 L962.6,147.1 L963,147.7 L963.4,150.3 L963.8,148.6 L964.2,148.7 L964.6,149.7 L965,148.3 L965.4,148.6 L965.8,148 L966.2,147.3 L966.6,148.4 L967,145.3 L967.4,149.6 L967.8,147.9 L968.2,149.5 L968.6,148.6 L969,148.4 L969.4,148.6 L969.8,149.1 L970.2,148.8 L970.6,150.2 L971,149 L971.4,148.7 L971.8,149.8 L972.2,149.2 L972.6,148.7 L973,149.8 L973.4,151.1 L973.8,149.8 L974.2,151.9 L974.6,151 L975,151 L975.4,150.2 L975.8,146.6 L976.2,149.9 L976.6,150.9 L977,150.8 L977.4,150.4 L977.8,150.2 L978.2,152.7 L978.6,152.2 L979,151.9 L979.4,152 L979.8,152.1 L980.2,150.2 L980.6,150.7 L981,151.4 L981.4,150.7 L981.8,151.1 L982.2,150.6 L982.6,150.2 L983,150.9 L983.4,149.4 L983.8,150.1 L984.2,151.1 L984.6,150.2 L985,150.2 L985.4,150.2 L985.8,151.6 L986.2,150 L986.6,152.3 L987,152.9 L987.4,151.2 L987.8,153.2 L988.2,152.5 L988.6,151 L989,152.2 L989.4,150.7 L989.8,151.3 L990.2,149.1 L990.6,151.7 L991,153 L991.4,151.3 L991.8,152.9 L992.2,154.2 L992.6,154 L993,152.6 L993.4,152.1 L993.8,152.6 L994.2,152.2 L994.6,153.6 L995,153.6 L995.4,152.2 L995.8,154.6 L996.2,154 L996.6,152.9 L997,151.6 L997.4,149 L997.8,151.7 L998.2,152.4 L998.6,152.3 L999,154 L999.4,153.8 L999.8,152 L1000.2,152 L1000.6,152.1 L1001,152.5 L1001.4,153.6 L1001.8,153.4 L1002.2,152.9 L1002.6,152.8 L1003,152.5 L1003.4,152.7 L1003.8,152.2 L1004.2,153.4 L1004.6,155.3 L1005,154.5 L1005.4,154.6 L1005.8,152.7 L1006.2,153 L1006.6,153.3 L1007,153.7 L1007.4,155.5 L1007.8,154.1 L1008.2,152.2 L1008.6,154.1 L1009,153.1 L1009.4,151.3 L1009.8,151.8 L1010.2,151.6 L1010.6,151.7 L1011,153.3 L1011.4,153.2 L1011.8,153.2 L1012.2,152.1 L1012.6,150.8 L1013,153.1 L1013.4,153 L1013.8,152.9 L1014.2,151.5 L1014.6,156.2 L1015,152.2 L1015.4,152.3 L1015.8,151.2 L1016.2,150 L1016.6,152.2 L1017,150.9 L1017.4,154.2 L1017.8,151.6 L1018.2,150.4 L1018.6,151.7 L1019,150.8 L1019.4,150.2 L1019.8,150.7 L1020.2,150 L1020.6,151.2 L1021,149.3 L1021.4,151.3 L1021.8,151.1 L1022.2,150.1 L1022.6,150.6 L1023,149 L1023.4,150.7 L1023.8,150.6 L1024.2,149.3 L1024.6,148.3 L1025,150.2 L1025.4,148.2 L1025.8,148 L1026.2,149.7 L1026.6,149.3 L1027,149.2 L1027.4,148.1 L1027.8,147.3 L1028.2,147 L1028.6,148.9 L1029,148.4 L1029.4,148.2 L1029.8,148.6 L1030.2,148.7 L1030.6,149.9 L1031,149.8 L1031.4,148.7 L1031.8,147.7 L1032.2,149.4 L1032.6,148.2 L1033,148 L1033.4,147.7 L1033.8,148.3 L1034.2,147.6 L1034.6,148.9 L1035,146.9 L1035.4,148.3 L1035.8,148.5 L1036.2,148.5 L1036.6,147.1 L1037,148 L1037.4,145.6 L1037.8,145.4 L1038.2,145.3 L1038.6,146 L1039,144.6 L1039.4,144.4 L1039.8,146.2 L1040.2,145.4 L1040.6,145.2 L1041,146.6 L1041.4,145.6 L1041.8,145.3 L1042.2,144.9 L1042.6,146.8 L1043,144.6 L1043.4,144 L1043.8,144.1 L1044.2,144.2 L1044.6,144.5 L1045,144.9 L1045.4,143.4 L1045.8,144.9 L1046.2,144.6 L1046.6,143.8 L1047,145 L1047.4,144.3 L1047.8,143.8 L1048.2,144.2 L1048.6,141.9 L1049,143.2 L1049.4,144.3 L1049.8,142.1 L1050.2,142.3 L1050.6,143.3 L1051,143 L1051.4,142.5 L1051.8,145.4 L1052.2,142.9 L1052.6,141.8 L1053,141.1 L1053.4,142.8 L1053.8,142 L1054.2,141.1 L1054.6,142.1 L1055,143.6 L1055.4,142.3 L1055.8,142.6 L1056.2,141.4 L1056.6,142.5 L1057,142.2 L1057.4,142.8 L1057.8,141.1 L1058.2,141.9 L1058.6,142.9 L1059,140.8 L1059.4,141.2 L1059.8,142.2 L1060.2,141.6 L1060.6,141.9 L1061,139.2 L1061.4,140.6 L1061.8,142.7 L1062.2,141.6 L1062.6,144 L1063,143 L1063.4,141.7 L1063.8,138.2 L1064.2,141.5 L1064.6,141.5 L1065,142.7 L1065.4,142.5 L1065.8,142.1 L1066.2,141.5 L1066.6,140.9 L1067,141.7 L1067.4,140.4 L1067.8,141.6 L1068.2,139.9 L1068.6,140.8 L1069,140.3 L1069.4,140.7 L1069.8,142.3 L1070.2,140.7 L1070.6,142.2 L1071,141.8 L1071.4,142 L1071.8,142.6 L1072.2,142 L1072.6,143.8 L1073,142.6 L1073.4,141.2 L1073.8,143.3 L1074.2,143.2 L1074.6,142.5 L1075,142.4 L1075.4,143.1 L1075.8,141 L1076.2,143.3 L1076.6,141.3 L1077,141.1 L1077.4,141.4 L1077.8,141.1 L1078.2,140.4 L1078.6,140.8 L1079,141.9 L1079.4,141.9 L1079.8,140.8 L1080.2,142.9 L1080.6,138.9 L1081,140.5 L1081.4,141 L1081.8,141.4 L1082.2,137 L1082.6,142.9 L1083,141.9 L1083.4,140.5 L1083.8,141 L1084.2,140.3 L1084.6,139.8 L1085,140.9 L1085.4,138.2 L1085.8,140.3 L1086.2,138.5 L1086.6,140.3 L1087,138.5 L1087.4,140.3 L1087.8,140.6 L1088.2,139 L1088.6,138.8 L1089,136.5 L1089.4,139.8 L1089.8,138.7 L1090.2,140.5 L1090.6,137.9 L1091,139.2 L1091.4,138.8 L1091.8,138.5 L1092.2,139.4 L1092.6,141.1 L1093,138.7 L1093.4,137.9 L1093.8,139.3 L1094.2,137.7 L1094.6,136.6 L1095,139 L1095.4,136.6 L1095.8,137.1 L1096.2,135.6 L1096.6,137.8 L1097,137.3 L1097.4,135.2 L1097.8,136.8 L1098.2,134.5 L1098.6,134.8 L1099,135.8 L1099.4,134.4 L1099.8,135 L1100.2,135.3 L1100.6,135.6 L1101,135 L1101.4,133.6 L1101.8,133.9 L1102.2,137.6 L1102.6,132.9 L1103,134.5 L1103.4,133.8 L1103.8,132.1 L1104.2,131.7 L1104.6,131.7 L1105,131.5 L1105.4,131 L1105.8,132.8 L1106.2,131.8 L1106.6,130.7 L1107,131.7 L1107.4,130.1 L1107.8,130.5 L1108.2,131.3 L1108.6,130.6 L1109,132.2 L1109.4,135.2 L1109.8,130.7 L1110.2,132.4 L1110.6,129.4 L1111,131.6 L1111.4,131.9 L1111.8,131.5 L1112.2,130.2 L1112.6,132.6 L1113,132.7 L1113.4,131.5 L1113.8,130.7 L1114.2,132 L1114.6,131.5 L1115,130.8 L1115.4,131.1 L1115.8,130.3 L1116.2,130 L1116.6,130 L1117,129.7 L1117.4,131.3 L1117.8,130.9 L1118.2,130.6 L1118.6,130.7 L1119,129.8 L1119.4,132.9 L1119.8,130.4 L1120.2,131.6 L1120.6,128.9 L1121,129.9 L1121.4,131.2 L1121.8,130.6 L1122.2,131.9 L1122.6,129.9 L1123,130.3 L1123.4,131.4 L1123.8,130.3 L1124.2,131.5 L1124.6,130.3 L1125,129.8 L1125.4,130.7 L1125.8,128.9 L1126.2,129.6 L1126.6,130 L1127,128.9 L1127.4,130.3 L1127.8,131.4 L1128.2,129.7 L1128.6,131.4 L1129,129.5 L1129.4,134.4 L1129.8,131.4 L1130.2,131.6 L1130.6,130.8 L1131,130.3 L1131.4,131 L1131.8,129.7 L1132.2,130.3 L1132.6,130.5 L1133,131.9 L1133.4,131.4 L1133.8,131.5 L1134.2,129.2 L1134.6,131.2 L1135,130.5 L1135.4,130.4 L1135.8,129.2 L1136.2,129.7 L1136.6,129 L1137,129.9 L1137.4,129.3 L1137.8,130.3 L1138.2,130 L1138.6,130.1 L1139,129.8 L1139.4,130.3 L1139.8,128.3 L1140.2,129.8 L1140.6,127.8 L1141,129.5 L1141.4,128.1 L1141.8,129.4 L1142.2,131.7 L1142.6,129.5 L1143,128.2 L1143.4,129.2 L1143.8,129.5 L1144.2,130.4 L1144.6,129.7 L1145,129.2 L1145.4,130.4 L1145.8,128.9 L1146.2,129.2 L1146.6,129.4 L1147,128 L1147.4,129.1 L1147.8,128.6 L1148.2,129.1 L1148.6,128.9 L1149,129.1 L1149.4,129.1 L1149.8,127.6 L1150.2,129.2 L1150.6,128.5 L1151,127.6 L1151.4,129.4 L1151.8,127.6 L1152.2,129 L1152.6,128.2 L1153,128.2 L1153.4,128.1 L1153.8,127.3 L1154.2,128.5 L1154.6,127.8 L1155,126.9 L1155.4,126.8 L1155.8,127.4 L1156.2,129 L1156.6,130.5 L1157,127.9 L1157.4,127.7 L1157.8,127.1 L1158.2,127.1 L1158.6,128 L1159,127.2 L1159.4,128.5 L1159.8,127.5 L1160.2,129.4 L1160.6,129.5 L1161,129 L1161.4,129.1 L1161.8,132.1 L1162.2,130.3 L1162.6,129.4 L1163,129.3 L1163.4,129.9 L1163.8,130.7 L1164.2,127.2 L1164.6,130.9 L1165,128.7 L1165.4,129.4 L1165.8,130.6 L1166.2,128.6 L1166.6,128.7 L1167,129.5 L1167.4,127.9 L1167.8,129.6 L1168.2,129.2 L1168.6,127.7 L1169,128.8 L1169.4,128.5 L1169.8,129.3 L1170.2,127.8 L1170.6,127.1 L1171,127.7 L1171.4,127.6 L1171.8,128.3 L1172.2,128.8 L1172.6,127.1 L1173,124 L1173.4,128.2 L1173.8,126.2 L1174.2,127.1 L1174.6,125.5 L1175,127.9 L1175.4,128 L1175.8,126.1 L1176.2,126.5 L1176.6,127.6 L1177,126.5 L1177.4,127.3 L1177.8,127.2 L1178.2,126.4 L1178.6,127 L1179,127.8 L1179.4,126 L1179.8,125.2 L1180.2,127.7 L1180.6,127.2 L1181,126.3 L1181.4,127.8 L1181.8,126.1 L1182.2,126.4 L1182.6,125.9 L1183,128 L1183.4,128.7 L1183.8,126.6 L1184.2,127.3 L1184.6,128.2 L1185,127.5 L1185.4,126.6 L1185.8,126.3 L1186.2,127.4 L1186.6,127.4 L1187,126.1 L1187.4,126 L1187.8,125.8 L1188.2,126.6 L1188.6,126.6 L1189,126.8 L1189.4,125.5 L1189.8,127.2 L1190.2,126.4 L1190.6,126.6 L1191,126.7 L1191.4,128.3 L1191.8,126.7 L1192.2,126.5 L1192.6,127 L1193,128.5 L1193.4,128 L1193.8,127.4 L1194.2,128.8 L1194.6,127.6 L1195,130 L1195.4,128.7 L1195.8,129.4 L1196.2,129.7 L1196.6,128.9 L1197,126.1 L1197.4,128.2 L1197.8,130.2 L1198.2,129.3 L1198.6,129.8 L1199,131.4 L1199.4,129.1 L1199.8,130.4 L1200.2,131.4 L1200.6,130.8 L1201,131.7 L1201.4,131.4 L1201.8,131.5 L1202.2,132.2 L1202.6,132.8 L1203,132.8 L1203.4,134.3 L1203.8,133.5 L1204.2,135.5 L1204.6,134.7 L1205,136 L1205.4,133.9 L1205.8,134 L1206.2,134.9 L1206.6,134.3 L1207,135.2 L1207.4,136.6 L1207.8,136.3 L1208.2,137.2 L1208.6,137.9 L1209,136 L1209.4,136.8 L1209.8,138.5 L1210.2,137.7 L1210.6,137.8 L1211,136.2 L1211.4,136.8 L1211.8,138.6 L1212.2,138.9 L1212.6,136.9 L1213,138.6 L1213.4,138.9 L1213.8,139 L1214.2,138.6 L1214.6,137.2 L1215,138.4 L1215.4,138.7 L1215.8,140 L1216.2,139.6 L1216.6,139.5 L1217,141.7 L1217.4,139.2 L1217.8,138.8 L1218.2,139.8 L1218.6,141.5 L1219,139.5 L1219.4,140.4 L1219.8,141.2 L1220.2,141.8 L1220.6,140.7 L1221,139.4 L1221.4,141.1 L1221.8,140.9 L1222.2,140.5 L1222.6,141.8 L1223,141.2 L1223.4,142.7 L1223.8,141.5 L1224.2,141.3 L1224.6,143.4 L1225,143.7 L1225.4,143.5 L1225.8,142.7 L1226.2,143.7 L1226.6,143.1 L1227,144.7 L1227.4,143.8 L1227.8,145.2 L1228.2,143 L1228.6,143.8 L1229,145.3 L1229.4,144.7 L1229.8,146.1 L1230.2,145.7 L1230.6,144.5 L1231,144.6 L1231.4,145.6 L1231.8,145.5 L1232.2,146.9 L1232.6,146.9 L1233,144.6 L1233.4,145.2 L1233.8,146.8 L1234.2,146.5 L1234.6,147.1 L1235,145.5 L1235.4,145.6 L1235.8,147.3 L1236.2,146.2 L1236.6,146 L1237,144.7 L1237.4,148 L1237.8,146.8 L1238.2,147.3 L1238.6,149.3 L1239,147.3 L1239.4,146.6 L1239.8,148 L1240.2,148 L1240.6,147.8 L1241,149.3 L1241.4,147.9 L1241.8,148.7 L1242.2,148 L1242.6,148.8 L1243,148.7 L1243.4,147.5 L1243.8,149.6 L1244.2,149 L1244.6,148.9 L1245,148.1 L1245.4,149.8 L1245.8,149.7 L1246.2,150.3 L1246.6,150.5 L1247,150.1 L1247.4,149.8 L1247.8,151.3 L1248.2,150.5 L1248.6,149.1 L1249,150.1 L1249.4,149.7 L1249.8,150.6 L1250.2,152 L1250.6,150.1 L1251,149.7 L1251.4,149.3 L1251.8,150.7 L1252.2,149.9 L1252.6,150.2 L1253,151.3 L1253.4,150.4 L1253.8,150.1 L1254.2,149 L1254.6,149.2 L1255,150 L1255.4,151.1 L1255.8,151.3 L1256.2,151.1 L1256.6,149 L1257,150.6 L1257.4,150.4 L1257.8,149.6 L1258.2,149.5 L1258.6,150.2 L1259,149.2 L1259.4,150.3 L1259.8,154.7 L1260.2,150.6 L1260.6,149.3 L1261,147.6 L1261.4,148.8 L1261.8,150.8 L1262.2,149 L1262.6,149.1 L1263,147.5 L1263.4,149.2 L1263.8,150.5 L1264.2,151.6 L1264.6,153.3 L1265,149.7 L1265.4,149.6 L1265.8,149.6 L1266.2,149.9 L1266.6,148.9 L1267,151.2 L1267.4,149.4 L1267.8,150.1 L1268.2,148.4 L1268.6,150 L1269,150.2 L1269.4,151.3 L1269.8,151.3 L1270.2,150.7 L1270.6,151.4 L1271,149.7 L1271.4,151.4 L1271.8,151.2 L1272.2,151.3 L1272.6,150.1 L1273,151.2 L1273.4,150.8 L1273.8,151.3 L1274.2,153.3 L1274.6,150.3 L1275,149.3 L1275.4,151 L1275.8,151.7 L1276.2,149.7 L1276.6,149.9 L1277,150.4 L1277.4,149.1 L1277.8,150.9 L1278.2,150.4 L1278.6,150.8 L1279,149.6 L1279.4,151.3 L1279.8,149.6 L1280.2,151.9 L1280.6,150.1 L1281,151.3 L1281.4,150.6 L1281.8,151 L1282.2,152 L1282.6,150.9 L1283,151.5 L1283.4,149.5 L1283.8,150.7 L1284.2,150 L1284.6,149.7 L1285,150.6 L1285.4,151.3 L1285.8,151.9 L1286.2,151 L1286.6,149.9 L1287,150.5 L1287.4,149.9 L1287.8,151.4 L1288.2,149.6 L1288.6,151.6 L1289,150.3 L1289.4,152.9 L1289.8,150.4 L1290.2,149.7 L1290.6,150.7 L1291,149.9 L1291.4,149.8 L1291.8,149.7 L1292.2,150.8 L1292.6,151.5 L1293,150.7 L1293.4,149.1 L1293.8,149.6 L1294.2,151.1 L1294.6,154.4 L1295,150.7 L1295.4,151.4 L1295.8,150.7 L1296.2,151 L1296.6,149.2 L1297,151.7 L1297.4,151.7 L1297.8,151.7 L1298.2,150.6 L1298.6,152.3 L1299,152.3 L1299.4,151.1 L1299.8,150.9 L1300.2,152.4 L1300.6,152.4 L1301,152.9 L1301.4,150.4 L1301.8,151.3 L1302.2,155.6 L1302.6,153.2 L1303,151.5 L1303.4,150.8 L1303.8,150.5 L1304.2,151.3 L1304.6,151.9 L1305,151.7 L1305.4,151.4 L1305.8,150.4 L1306.2,152.4 L1306.6,150.7 L1307,151.7 L1307.4,149.3 L1307.8,151.5 L1308.2,152 L1308.6,152.3 L1309,151.8 L1309.4,151 L1309.8,150.1 L1310.2,151.3 L1310.6,150 L1311,148.7 L1311.4,151.6 L1311.8,154.4 L1312.2,151.6 L1312.6,151.3 L1313,149.8 L1313.4,151.5 L1313.8,150.1 L1314.2,150 L1314.6,151.2 L1315,152 L1315.4,154.5 L1315.8,151.6 L1316.2,150.6 L1316.6,151.2 L1317,150.8 L1317.4,151.8 L1317.8,152 L1318.2,150.6 L1318.6,151.1 L1319,151.9 L1319.4,150.4 L1319.8,150.2 L1320.2,151.7 L1320.6,150.1 L1321,151 L1321.4,152.2 L1321.8,149.7 L1322.2,150 L1322.6,149.8 L1323,149.2 L1323.4,150.5 L1323.8,150.2 L1324.2,150.2 L1324.6,150.5 L1325,151.3 L1325.4,152.3 L1325.8,149.8 L1326.2,151.8 L1326.6,150.6 L1327,151.5 L1327.4,149.9 L1327.8,151 L1328.2,151.9 L1328.6,152.3 L1329,151.9 L1329.4,149.9 L1329.8,150.7 L1330.2,149.8 L1330.6,152 L1331,150.2 L1331.4,149.7 L1331.8,152.8 L1332.2,149.3 L1332.6,150.4 L1333,152.1 L1333.4,150.6 L1333.8,151.4 L1334.2,149.7 L1334.6,150 L1335,150.4 L1335.4,150.2 L1335.8,150.8 L1336.2,149.5 L1336.6,149.4 L1337,149.9 L1337.4,150.7 L1337.8,149.5 L1338.2,149.6 L1338.6,150.8 L1339,151 L1339.4,151.4 L1339.8,149.5 L1340.2,149.5 L1340.6,151.5 L1341,150.8 L1341.4,150.9 L1341.8,149.5 L1342.2,153.6 L1342.6,151.3 L1343,150.7 L1343.4,150 L1343.8,151.8 L1344.2,150.2 L1344.6,151.7 L1345,151.1 L1345.4,151.1 L1345.8,150.6 L1346.2,150.9 L1346.6,150.6 L1347,150.1 L1347.4,150.5 L1347.8,149.5 L1348.2,147.3 L1348.6,148.5 L1349,148.4 L1349.4,149.6 L1349.8,148.1 L1350.2,148.8 L1350.6,149.7 L1351,149.8 L1351.4,150 L1351.8,147.9 L1352.2,148.2 L1352.6,149.2 L1353,147.4 L1353.4,144.3 L1353.8,152.6 L1354.2,147.9 L1354.6,150 L1355,149.3 L1355.4,147.6 L1355.8,147.4 L1356.2,149.5 L1356.6,150.4 L1357,149.3 L1357.4,147.8 L1357.8,149.5 L1358.2,147.7 L1358.6,148.3 L1359,149.2 L1359.4,149.3 L1359.8,148.1 L1360.2,149.7 L1360.6,150.4 L1361,147.6 L1361.4,149.2 L1361.8,148.8 L1362.2,150.3 L1362.6,150.6 L1363,148.5 L1363.4,149.9 L1363.8,150.8 L1364.2,149.2 L1364.6,149.2 L1365,150.9 L1365.4,150.7 L1365.8,151.1 L1366.2,147.1 L1366.6,147.4 L1367,150.2 L1367.4,149.9 L1367.8,150.3 L1368.2,149.9 L1368.6,150.9 L1369,150.7 L1369.4,148.9 L1369.8,148.8 L1370.2,151.5 L1370.6,150.6 L1371,150.9 L1371.4,148.7 L1371.8,149 L1372.2,149.9 L1372.6,150.3 L1373,150.3 L1373.4,149.9 L1373.8,150.4 L1374.2,150.4 L1374.6,149.7 L1375,150.7 L1375.4,149.2 L1375.8,150.2 L1376.2,148.8 L1376.6,150.2 L1377,149.7 L1377.4,150.3 L1377.8,149 L1378.2,148.7 L1378.6,149.8 L1379,149 L1379.4,149.8 L1379.8,149 L1380.2,149.5 L1380.6,149.3 L1381,147.7 L1381.4,148.7 L1381.8,147.6 L1382.2,151.2 L1382.6,148.9 L1383,148.7 L1383.4,149 L1383.8,148.3 L1384.2,145.5 L1384.6,148.7 L1385,151.4 L1385.4,147.8 L1385.8,147.4 L1386.2,148.8 L1386.6,148.4 L1387,148.7 L1387.4,149.3 L1387.8,146.5 L1388.2,146.7 L1388.6,148.4 L1389,148.6 L1389.4,148.9 L1389.8,149.3 L1390.2,148 L1390.6,150 L1391,147.5 L1391.4,147.6 L1391.8,149.7 L1392.2,147.5 L1392.6,148.4 L1393,149 L1393.4,148.4 L1393.8,150.1 L1394.2,149.7 L1394.6,148.1 L1395,147.7 L1395.4,147.1 L1395.8,148.1 L1396.2,147.6 L1396.6,149.3 L1397,147.9 L1397.4,147.2 L1397.8,148.3 L1398.2,149 L1398.6,149.6 L1399,145.2 L1399.4,148.2 L1399.8,148 L1400.2,148.2 L1400.6,149.2 L1401,149 L1401.4,148.8 L1401.8,148.9 L1402.2,149.5 L1402.6,148.4 L1403,149.2 L1403.4,148.4 L1403.8,148.9 L1404.2,148.4 L1404.6,148.1 L1405,149.9 L1405.4,149.2 L1405.8,149.3 L1406.2,148.5 L1406.6,149.9 L1407,148 L1407.4,149.6 L1407.8,149 L1408.2,148.7 L1408.6,149.6 L1409,149.7 L1409.4,148.8 L1409.8,147.7 L1410.2,149.2 L1410.6,149.2 L1411,148.2 L1411.4,147.3 L1411.8,148.3 L1412.2,148.8 L1412.6,146.9 L1413,148.3 L1413.4,145.7 L1413.8,145.8 L1414.2,145.8 L1414.6,147.4 L1415,146.3 L1415.4,145.3 L1415.8,147 L1416.2,145.1 L1416.6,147.3 L1417,146.6 L1417.4,145.7 L1417.8,145 L1418.2,146.2 L1418.6,146.9 L1419,144.1 L1419.4,145.7 L1419.8,146.2 L1420.2,146.1 L1420.6,145.6 L1421,146.3 L1421.4,145.4 L1421.8,143.8 L1422.2,145.3 L1422.6,144.5 L1423,143.9 L1423.4,143.3 L1423.8,145.2 L1424.2,143.1 L1424.6,143.9 L1425,144.1 L1425.4,142.4 L1425.8,142.7 L1426.2,142.6 L1426.6,143.9 L1427,144.2 L1427.4,142.1 L1427.8,140.5 L1428.2,142.1 L1428.6,143.9 L1429,142.5 L1429.4,141.3 L1429.8,143 L1430.2,143.2 L1430.6,144 L1431,143.9 L1431.4,141.8 L1431.8,143.8 L1432.2,142 L1432.6,142.7 L1433,143.8 L1433.4,144 L1433.8,142 L1434.2,144 L1434.6,143 L1435,144.1 L1435.4,141.8 L1435.8,143.6 L1436.2,141.1 L1436.6,141.5 L1437,142 L1437.4,141.8 L1437.8,142.3 L1438.2,142.3 L1438.6,139.7 L1439,142.1 L1439.4,143.4 L1439.8,142.1 L1440.2,143.3 L1440.6,141.8 L1441,143.4 L1441.4,143.4 L1441.8,141.9 L1442.2,143.6 L1442.6,141.8 L1443,141 L1443.4,140.9 L1443.8,141.5 L1444.2,142.9 L1444.6,142.3 L1445,143 L1445.4,142.8 L1445.8,141.7 L1446.2,141.6 L1446.6,142.5 L1447,141.6 L1447.4,141.2 L1447.8,142 L1448.2,141.9 L1448.6,143 L1449,141.3 L1449.4,141.7 L1449.8,142.7 L1450.2,144.2 L1450.6,142.4 L1451,142.6 L1451.4,141.8 L1451.8,143.4 L1452.2,143.9 L1452.6,144 L1453,139.9 L1453.4,144 L1453.8,144.7 L1454.2,143.2 L1454.6,143.7 L1455,141.9 L1455.4,144 L1455.8,143.1 L1456.2,144.2 L1456.6,143.8 L1457,144 L1457.4,142.2 L1457.8,142.1 L1458.2,142.5 L1458.6,144.8 L1459,143.1 L1459.4,143.1 L1459.8,142.2 L1460.2,141.9 L1460.6,142 L1461,144 L1461.4,143.2 L1461.8,142.4 L1462.2,143.4 L1462.6,142.5 L1463,143.3 L1463.4,143.4 L1463.8,143 L1464.2,142.4 L1464.6,141.9 L1465,142.7 L1465.4,141.9 L1465.8,144 L1466.2,143.1 L1466.6,143.3 L1467,144.2 L1467.4,142.3 L1467.8,142.5 L1468.2,142.8 L1468.6,142.9 L1469,143.2 L1469.4,142.4 L1469.8,143.8 L1470.2,142.2 L1470.6,140.5 L1471,141.8 L1471.4,142.4 L1471.8,144.2 L1472.2,143 L1472.6,142.3 L1473,142.8 L1473.4,143.2 L1473.8,141.7 L1474.2,144.5 L1474.6,141.6 L1475,142.7 L1475.4,142.7 L1475.8,142.8 L1476.2,144.1 L1476.6,142.3 L1477,142.5 L1477.4,142.6 L1477.8,142.1 L1478.2,142.3 L1478.6,142.3 L1479,144.2 L1479.4,142.5 L1479.8,140.6 L1480.2,143.8 L1480.6,143.6 L1481,143.5 L1481.4,144 L1481.8,142.8 L1482.2,142.4 L1482.6,143.9 L1483,143.5 L1483.4,145.1 L1483.8,144.4 L1484.2,143.7 L1484.6,143.3 L1485,142.7 L1485.4,143.3 L1485.8,143.6 L1486.2,143 L1486.6,142.7 L1487,142.6 L1487.4,143.2 L1487.8,144 L1488.2,144.5 L1488.6,143.8 L1489,142.4 L1489.4,144.4 L1489.8,145.4 L1490.2,145.5 L1490.6,141.1 L1491,143.6 L1491.4,145.2 L1491.8,145.4 L1492.2,144.6 L1492.6,143.4 L1493,144.1 L1493.4,142.5 L1493.8,143.8 L1494.2,143.9 L1494.6,144 L1495,143.6 L1495.4,143.2 L1495.8,143.3 L1496.2,141.8 L1496.6,142.3 L1497,141.9 L1497.4,141.3 L1497.8,142 L1498.2,141.6 L1498.6,141.3 L1499,142.1 L1499.4,140.7 L1499.8,140.7 L1500.2,142.3 L1500.6,141.9 L1501,141.5 L1501.4,140.5 L1501.8,139.9 L1502.2,138.6 L1502.6,139.4 L1503,140 L1503.4,141.1 L1503.8,140.6 L1504.2,140.3 L1504.6,138.7 L1505,138.1 L1505.4,140.2 L1505.8,137.7 L1506.2,139.9 L1506.6,141.8 L1507,137.8 L1507.4,138.5 L1507.8,139.7 L1508.2,137.4 L1508.6,137.8 L1509,136.7 L1509.4,137.4 L1509.8,136.7 L1510.2,136.5 L1510.6,135 L1511,136.5 L1511.4,135.5 L1511.8,135.8 L1512.2,135.7 L1512.6,136.6 L1513,137.4 L1513.4,135.5 L1513.8,136.6 L1514.2,136 L1514.6,134.9 L1515,136.7 L1515.4,131.3 L1515.8,136.6 L1516.2,133.5 L1516.6,137.1 L1517,136.6 L1517.4,135.2 L1517.8,135.1 L1518.2,134.5 L1518.6,135.7 L1519,135.6 L1519.4,136.3 L1519.8,136.1 L1520.2,135.4 L1520.6,135.6 L1521,137.2 L1521.4,137.6 L1521.8,136.4 L1522.2,137.1 L1522.6,135.8 L1523,136.2 L1523.4,136.9 L1523.8,137 L1524.2,136.1 L1524.6,135.3 L1525,137.7 L1525.4,137.3 L1525.8,135.6 L1526.2,134.3 L1526.6,137.2 L1527,137.1 L1527.4,137.7 L1527.8,137.1 L1528.2,136.8 L1528.6,136.7 L1529,135.8 L1529.4,136.1 L1529.8,136.1 L1530.2,136.8 L1530.6,135.7 L1531,136 L1531.4,136.8 L1531.8,136.8 L1532.2,135.8 L1532.6,136.7 L1533,135.1 L1533.4,136.5 L1533.8,135.7 L1534.2,134.9 L1534.6,136.6 L1535,135.8 L1535.4,136.9 L1535.8,135.8 L1536.2,136.7 L1536.6,137.5 L1537,135.9 L1537.4,135.2 L1537.8,137.5 L1538.2,137.9 L1538.6,137.3 L1539,137.2 L1539.4,136.4 L1539.8,135.4 L1540.2,134.9 L1540.6,135.7 L1541,133.8 L1541.4,134.8 L1541.8,136.9 L1542.2,136.2 L1542.6,135.1 L1543,135.8 L1543.4,135.1 L1543.8,136.6 L1544.2,135.5 L1544.6,136.2 L1545,136.3 L1545.4,136.2 L1545.8,134.9 L1546.2,136.2 L1546.6,136.4 L1547,135.6 L1547.4,136.8 L1547.8,136.4 L1548.2,135 L1548.6,135.8 L1549,136.4 L1549.4,135.6 L1549.8,136.2 L1550.2,137.2 L1550.6,136.5 L1551,134.9 L1551.4,135 L1551.8,135.7 L1552.2,136.1 L1552.6,136.7 L1553,137.1 L1553.4,136.5 L1553.8,136.9 L1554.2,134.2 L1554.6,139.7 L1555,135.7 L1555.4,137.4 L1555.8,137.5 L1556.2,136.7 L1556.6,138 L1557,136.7 L1557.4,138.4 L1557.8,138.4 L1558.2,136.7 L1558.6,137.8 L1559,138.3 L1559.4,137.6 L1559.8,136.4 L1560.2,138 L1560.6,136.8 L1561,137 L1561.4,135.2 L1561.8,136.6 L1562.2,135.3 L1562.6,137 L1563,135.8 L1563.4,137.7 L1563.8,138.6 L1564.2,138.2 L1564.6,138.2 L1565,137.4 L1565.4,136.7 L1565.8,137.9 L1566.2,137.5 L1566.6,136.1 L1567,136.8 L1567.4,137 L1567.8,136.5 L1568.2,137.4 L1568.6,136.9 L1569,137.2 L1569.4,136.9 L1569.8,138.3 L1570.2,137.7 L1570.6,137.4 L1571,135.9 L1571.4,137.9 L1571.8,137.5 L1572.2,137 L1572.6,138.3 L1573,138.3 L1573.4,136.5 L1573.8,136.6 L1574.2,137.7 L1574.6,137.8 L1575,137.7 L1575.4,135.9 L1575.8,138.5 L1576.2,138.9 L1576.6,138.4 L1577,137.4 L1577.4,139.4 L1577.8,137.3 L1578.2,137.1 L1578.6,137.8 L1579,139.2 L1579.4,136.7 L1579.8,137 L1580.2,138.3 L1580.6,137.9 L1581,136.1 L1581.4,136.8 L1581.8,137.6 L1582.2,137.8 L1582.6,138.3 L1583,138.6 L1583.4,139.3 L1583.8,136.8 L1584.2,139.6 L1584.6,137.5 L1585,141.7 L1585.4,139.9 L1585.8,138.1 L1586.2,138.1 L1586.6,142.5 L1587,138.3 L1587.4,139.9 L1587.8,139.4 L1588.2,137.8 L1588.6,139 L1589,137.9 L1589.4,137.2 L1589.8,139.3 L1590.2,137.4 L1590.6,138.5 L1591,138.8 L1591.4,136.6 L1591.8,137.6 L1592.2,138.2 L1592.6,138.6 L1593,138.6 L1593.4,138 L1593.8,139.2 L1594.2,138.8 L1594.6,139 L1595,138.7 L1595.4,137.9 L1595.8,137.8 L1596.2,138.8 L1596.6,139 L1597,137.1 L1597.4,136.6 L1597.8,139.4 L1598.2,138.7 L1598.6,138.9 L1599,138.7 L1599.4,138.4 L1599.8,138.9 L1600.2,139.7 L1600.6,139.4 L1601,140.7 L1601.4,141.2 L1601.8,140.7 L1602.2,141.3 L1602.6,139.8 L1603,139.9 L1603.4,140.1 L1603.8,140.3 L1604.2,140.3 L1604.6,138.7 L1605,139.3 L1605.4,140.4 L1605.8,139.9 L1606.2,140.7 L1606.6,141.2 L1607,139.6 L1607.4,141.7 L1607.8,140.3 L1608.2,140.4 L1608.6,142 L1609,140.3 L1609.4,140.4 L1609.8,139.8 L1610.2,141.3 L1610.6,140.2 L1611,139.3 L1611.4,139.2 L1611.8,139 L1612.2,136.6 L1612.6,140.3 L1613,135.8 L1613.4,143.2 L1613.8,138.9 L1614.2,139.3 L1614.6,140 L1615,140.2 L1615.4,140.3 L1615.8,140.2 L1616.2,140.7 L1616.6,140.7 L1617,140.2 L1617.4,140 L1617.8,141.2 L1618.2,141.4 L1618.6,139.8 L1619,141.4 L1619.4,140.6 L1619.8,139.6 L1620.2,138.9 L1620.6,141 L1621,140.7 L1621.4,139 L1621.8,139.5 L1622.2,139 L1622.6,134.6 L1623,139.4 L1623.4,138 L1623.8,137.5 L1624.2,137.8 L1624.6,137.9 L1625,137.7 L1625.4,140.4 L1625.8,141.1 L1626.2,138.1 L1626.6,136.6 L1627,136.4 L1627.4,136.4 L1627.8,137.3 L1628.2,141.6 L1628.6,137.1 L1629,136.4 L1629.4,135.6 L1629.8,136.2 L1630.2,135.1 L1630.6,134.6 L1631,136 L1631.4,136.4 L1631.8,135.9 L1632.2,134.4 L1632.6,134 L1633,136.2 L1633.4,134.8 L1633.8,133.1 L1634.2,134.3 L1634.6,133.1 L1635,134.4 L1635.4,133.7 L1635.8,133.3 L1636.2,131.9 L1636.6,132 L1637,133 L1637.4,131.5 L1637.8,133 L1638.2,131.7 L1638.6,132.4 L1639,132.6 L1639.4,131.8 L1639.8,131.5 L1640.2,132.5 L1640.6,129.5 L1641,131.6 L1641.4,130.4 L1641.8,129.1 L1642.2,131.7 L1642.6,128.2 L1643,129.3 L1643.4,126.7 L1643.8,126 L1644.2,125.2 L1644.6,124.6 L1645,124.4 L1645.4,124.6 L1645.8,123.4 L1646.2,124.1 L1646.6,123.4 L1647,124.2 L1647.4,124.6 L1647.8,123.7 L1648.2,124.7 L1648.6,123 L1649,123 L1649.4,124.2 L1649.8,123.6 L1650.2,122.3 L1650.6,123 L1651,122.4 L1651.4,123.7 L1651.8,123.6 L1652.2,123 L1652.6,124 L1653,122.1 L1653.4,122.6 L1653.8,121.9 L1654.2,122.9 L1654.6,123.1 L1655,122.2 L1655.4,124.1 L1655.8,124 L1656.2,122.2 L1656.6,126.4 L1657,122.2 L1657.4,122.9 L1657.8,121.2 L1658.2,122.2 L1658.6,122.3 L1659,123.3 L1659.4,125.3 L1659.8,122.1 L1660.2,121.1 L1660.6,122.5 L1661,122.6 L1661.4,122.4 L1661.8,123.2 L1662.2,121.8 L1662.6,126.5 L1663,122.9 L1663.4,122.7 L1663.8,122.6 L1664.2,121.9 L1664.6,121.7 L1665,123.5 L1665.4,123.4 L1665.8,122.8 L1666.2,122.3 L1666.6,124 L1667,123.8 L1667.4,122.5 L1667.8,124 L1668.2,123.4 L1668.6,125 L1669,122.7 L1669.4,122 L1669.8,122.4 L1670.2,122.7 L1670.6,123.5 L1671,124.2 L1671.4,123.5 L1671.8,124.9 L1672.2,124.7 L1672.6,123.2 L1673,123.2 L1673.4,123.2 L1673.8,123.8 L1674.2,123 L1674.6,123.7 L1675,123.1 L1675.4,123.7 L1675.8,125.4 L1676.2,124.5 L1676.6,123.1 L1677,122.8 L1677.4,124.7 L1677.8,123.8 L1678.2,125.4 L1678.6,122.3 L1679,122.5 L1679.4,123.4 L1679.8,122.1 L1680.2,124 L1680.6,124.2 L1681,124.6 L1681.4,124.9 L1681.8,124.9 L1682.2,123.3 L1682.6,124.7 L1683,124.3 L1683.4,123 L1683.8,124.9 L1684.2,124 L1684.6,124.1 L1685,125 L1685.4,126.3 L1685.8,125.2 L1686.2,123.6 L1686.6,125.1 L1687,123.5 L1687.4,123.4 L1687.8,125.8 L1688.2,126 L1688.6,124.2 L1689,124.4 L1689.4,126.7 L1689.8,126.8 L1690.2,126.1 L1690.6,124.8 L1691,125.2 L1691.4,125.6 L1691.8,126.7 L1692.2,126.8 L1692.6,129 L1693,126 L1693.4,126.8 L1693.8,128.2 L1694.2,127.9 L1694.6,127.5 L1695,126 L1695.4,126.6 L1695.8,127.3 L1696.2,127.5 L1696.6,128.7 L1697,127.6 L1697.4,128.6 L1697.8,127.6 L1698.2,127.1 L1698.6,127.1 L1699,128.3 L1699.4,127.1 L1699.8,124.8 L1700.2,128.3 L1700.6,129.3 L1701,128.7 L1701.4,129.8 L1701.8,127.9 L1702.2,130.2 L1702.6,130.2 L1703,130.9 L1703.4,129.1 L1703.8,130.1 L1704.2,131.2 L1704.6,129.4 L1705,131.3 L1705.4,130.7 L1705.8,130.2 L1706.2,132.2 L1706.6,132.5 L1707,131 L1707.4,131.6 L1707.8,132.5 L1708.2,133.1 L1708.6,132.9 L1709,132.4 L1709.4,131.5 L1709.8,131.9 L1710.2,132.4 L1710.6,131.8 L1711,132.5 L1711.4,129.9 L1711.8,130.3 L1712.2,130.1 L1712.6,130.1 L1713,132.3 L1713.4,130.5 L1713.8,132.5 L1714.2,132.4 L1714.6,130.9 L1715,131.6 L1715.4,132.7 L1715.8,129.5 L1716.2,131.3 L1716.6,130.9 L1717,130.1 L1717.4,130.2 L1717.8,131.3 L1718.2,130.6 L1718.6,130.4 L1719,131.1 L1719.4,129.8 L1719.8,129.5 L1720.2,129.4 L1720.6,129.3 L1721,130.7 L1721.4,129.1 L1721.8,132.8 L1722.2,129.9 L1722.6,127.9 L1723,128.7 L1723.4,128.8 L1723.8,130.4 L1724.2,130.7 L1724.6,129.8 L1725,128 L1725.4,128.1 L1725.8,128.1 L1726.2,127.4 L1726.6,129.3 L1727,128.9 L1727.4,127 L1727.8,127.5 L1728.2,126.9 L1728.6,128.9 L1729,126.9 L1729.4,127.6 L1729.8,128.4 L1730.2,127.3 L1730.6,128.3 L1731,127.9 L1731.4,128.4 L1731.8,126.9 L1732.2,127.2 L1732.6,131.3 L1733,127 L1733.4,127.8 L1733.8,126.7 L1734.2,127.1 L1734.6,124.8 L1735,125.5 L1735.4,125.7 L1735.8,127.6 L1736.2,126.3 L1736.6,127.5 L1737,127.2 L1737.4,127.9 L1737.8,126.9 L1738.2,130.7 L1738.6,125.4 L1739,126.7 L1739.4,126.3 L1739.8,125.2 L1740.2,126.4 L1740.6,126 L1741,126.6 L1741.4,126.3 L1741.8,126 L1742.2,126.6 L1742.6,127.6 L1743,125.5 L1743.4,125.7 L1743.8,125.3 L1744.2,125.5 L1744.6,126.2 L1745,125.6 L1745.4,124.5 L1745.8,125.8 L1746.2,125.6 L1746.6,124.7 L1747,125.8 L1747.4,126.7 L1747.8,127.1 L1748.2,126.3 L1748.6,123.4 L1749,125.4 L1749.4,124.5 L1749.8,125.1 L1750.2,124.6 L1750.6,126.3 L1751,126.5 L1751.4,127.1 L1751.8,124.6 L1752.2,126.3 L1752.6,124.6 L1753,124.6 L1753.4,126.8 L1753.8,127.5 L1754.2,125.7 L1754.6,127.3 L1755,126.7 L1755.4,126.3 L1755.8,126.6 L1756.2,127.1 L1756.6,125.4 L1757,124.3 L1757.4,124.8 L1757.8,127 L1758.2,124.4 L1758.6,127.8 L1759,124.4 L1759.4,126.3 L1759.8,124.5 L1760.2,125 L1760.6,126.4 L1761,125 L1761.4,125.8 L1761.8,125.4 L1762.2,125.9 L1762.6,125.2 L1763,125 L1763.4,125.7 L1763.8,124.4 L1764.2,124.9 L1764.6,126.7 L1765,126.6 L1765.4,125.7 L1765.8,125.1 L1766.2,125.8 L1766.6,125 L1767,127.2 L1767.4,126.2 L1767.8,126.9 L1768.2,125.9 L1768.6,124.3 L1769,125.9 L1769.4,126.4 L1769.8,128.4 L1770.2,130.3 L1770.6,126.6 L1771,125 L1771.4,126.1 L1771.8,126.7 L1772.2,125.9 L1772.6,125.9 L1773,125.1 L1773.4,125.6 L1773.8,126.7 L1774.2,126.5 L1774.6,125.4 L1775,126.3 L1775.4,126.3 L1775.8,126.9 L1776.2,127 L1776.6,125.5 L1777,123.6 L1777.4,125.5 L1777.8,125.2 L1778.2,127.1 L1778.6,126 L1779,125.4 L1779.4,126.8 L1779.8,126.7 L1780.2,126 L1780.6,124.8 L1781,125.4 L1781.4,124.1 L1781.8,125.5 L1782.2,124.9 L1782.6,125.7 L1783,124.3 L1783.4,124 L1783.8,125 L1784.2,125.4 L1784.6,122.8 L1785,126.2 L1785.4,124.9 L1785.8,125.3 L1786.2,126.3 L1786.6,124.7 L1787,124.3 L1787.4,125.2 L1787.8,123.8 L1788.2,125.8 L1788.6,125.6 L1789,123.5 L1789.4,123.9 L1789.8,124.9 L1790.2,124.5 L1790.6,125 L1791,122.8 L1791.4,125.3 L1791.8,123 L1792.2,123.1 L1792.6,123 L1793,123.7 L1793.4,121.9 L1793.8,124.3 L1794.2,122.6 L1794.6,123.1 L1795,123.3 L1795.4,120.6 L1795.8,123.4 L1796.2,123.7 L1796.6,122.6 L1797,123 L1797.4,122.1 L1797.8,124 L1798.2,122 L1798.6,121.9 L1799,121.9 L1799.4,122.2 L1799.8,120.7 L1800.2,121.7 L1800.6,124.5 L1801,120.9 L1801.4,119.7 L1801.8,119.5 L1802.2,120.2 L1802.6,115.8 L1803,119.6 L1803.4,120.3 L1803.8,118.9 L1804.2,119.5 L1804.6,120.1 L1805,121.1 L1805.4,117.8 L1805.8,119.9 L1806.2,121.2 L1806.6,120.9 L1807,120.8 L1807.4,122.6 L1807.8,121.7 L1808.2,121.5 L1808.6,120 L1809,121.5 L1809.4,121 L1809.8,117.6 L1810.2,120.3 L1810.6,121.8 L1811,121 L1811.4,121.5 L1811.8,119.4 L1812.2,119.6 L1812.6,120.5 L1813,119.3 L1813.4,119.7 L1813.8,121.8 L1814.2,119.9 L1814.6,120.6 L1815,119.6 L1815.4,119.9 L1815.8,120 L1816.2,119.1 L1816.6,119.5 L1817,119.4 L1817.4,120.3 L1817.8,117.9 L1818.2,120.2 L1818.6,118.1 L1819,118.3 L1819.4,119 L1819.8,118.7 L1820.2,118.6 L1820.6,121 L1821,120.2 L1821.4,120.7 L1821.8,118.4 L1822.2,119.6 L1822.6,117.6 L1823,118.1 L1823.4,119.2 L1823.8,116 L1824.2,119.1 L1824.6,119.3 L1825,117.9 L1825.4,118.4 L1825.8,118.3 L1826.2,119.1 L1826.6,120.8 L1827,119.5 L1827.4,122.3 L1827.8,120.3 L1828.2,119.1 L1828.6,119.7 L1829,119.9 L1829.4,120.5 L1829.8,119.5 L1830.2,119 L1830.6,119.9 L1831,119.6 L1831.4,121.2 L1831.8,119.5 L1832.2,120.1 L1832.6,120.3 L1833,120.1 L1833.4,121.1 L1833.8,119.1 L1834.2,119.6 L1834.6,120.7 L1835,120.1 L1835.4,122.5 L1835.8,118.3 L1836.2,118.4 L1836.6,120.1 L1837,120.9 L1837.4,120.6 L1837.8,118.8 L1838.2,118.5 L1838.6,120.6 L1839,120.6 L1839.4,121.5 L1839.8,121.6 L1840.2,119.3 L1840.6,120.7 L1841,121.5 L1841.4,121.3 L1841.8,119.8 L1842.2,119.8 L1842.6,121.4 L1843,119.4 L1843.4,119.8 L1843.8,118.9 L1844.2,119.1 L1844.6,121 L1845,121.4 L1845.4,119.7 L1845.8,119.9 L1846.2,118.7 L1846.6,119.9 L1847,120.8 L1847.4,119.6 L1847.8,119.4 L1848.2,119.3 L1848.6,120.4 L1849,119.8 L1849.4,121.2 L1849.8,119.9 L1850.2,119.1 L1850.6,118.3 L1851,118.8 L1851.4,119 L1851.8,120.1 L1852.2,118.9 L1852.6,117.7 L1853,120 L1853.4,118.2 L1853.8,120 L1854.2,119.8 L1854.6,120.9 L1855,120.1 L1855.4,118.4 L1855.8,119.6 L1856.2,119.6 L1856.6,120 L1857,120.1 L1857.4,120.5 L1857.8,120.1 L1858.2,120.6 L1858.6,119.4 L1859,120.9 L1859.4,119.4 L1859.8,119.2 L1860.2,119.8 L1860.6,120.4 L1861,121.1 L1861.4,119.9 L1861.8,119.5 L1862.2,118.3 L1862.6,116.8 L1863,118.1 L1863.4,118.9 L1863.8,118.6 L1864.2,120.6 L1864.6,119.1 L1865,119 L1865.4,119.5 L1865.8,120.8 L1866.2,119.4 L1866.6,119.5 L1867,120.1 L1867.4,119.8 L1867.8,121.2 L1868.2,121.5 L1868.6,121.1 L1869,119.6 L1869.4,121.5 L1869.8,121.1 L1870.2,121.5 L1870.6,119.5 L1871,119.7 L1871.4,119.3 L1871.8,121 L1872.2,121 L1872.6,119.3 L1873,118.8 L1873.4,118.4 L1873.8,119.5 L1874.2,118.2 L1874.6,119.6 L1875,117.9 L1875.4,118.5 L1875.8,118.1 L1876.2,119.7 L1876.6,115.5 L1877,117.7 L1877.4,117.8 L1877.8,119 L1878.2,121.3 L1878.6,120.4 L1879,118.2 L1879.4,120.4 L1879.8,119.2 L1880.2,120.4 L1880.6,119 L1881,119.9 L1881.4,118.9 L1881.8,118.2 L1882.2,121.4 L1882.6,119.7 L1883,119.3 L1883.4,120.7 L1883.8,120.2 L1884.2,121.4 L1884.6,120.8 L1885,121 L1885.4,120.8 L1885.8,118.6 L1886.2,120.1 L1886.6,119.7 L1887,120 L1887.4,118.3 L1887.8,118.7 L1888.2,118.5 L1888.6,119.5 L1889,119.1 L1889.4,119.3 L1889.8,119.7 L1890.2,118.6 L1890.6,118.5 L1891,119.1 L1891.4,122.3 L1891.8,120.4 L1892.2,122.4 L1892.6,121.1 L1893,118.6 L1893.4,123.1 L1893.8,119.9 L1894.2,120.1 L1894.6,116.6 L1895,119.4 L1895.4,119.7 L1895.8,117.8 L1896.2,121.8 L1896.6,121.7 L1897,118.3 L1897.4,118.2 L1897.8,118 L1898.2,119.8 L1898.6,120.2 L1899,116.3 L1899.4,117.4 L1899.8,117.8 L1900.2,118.2 L1900.6,117.7 L1901,119.1 L1901.4,118 L1901.8,118.4 L1902.2,118.6 L1902.6,118.8 L1903,117.4 L1903.4,118.5 L1903.8,117 L1904.2,117.4 L1904.6,116.9 L1905,118 L1905.4,116.8 L1905.8,116.4 L1906.2,117.3 L1906.6,117.2 L1907,118.4 L1907.4,117 L1907.8,116.6 L1908.2,116.1 L1908.6,117.1 L1909,118.9 L1909.4,117.6 L1909.8,118.2 L1910.2,119.8 L1910.6,119 L1911,118.2 L1911.4,117.1 L1911.8,118.5 L1912.2,118.1 L1912.6,117.2 L1913,116.9 L1913.4,120.9 L1913.8,117.6 L1914.2,117.6 L1914.6,118.3 L1915,117.1 L1915.4,117.2 L1915.8,117.6 L1916.2,115.7 L1916.6,117.6" fill="none" stroke="#007f00" stroke-width="1.15"/>
<line x1="807" y1="349.5" x2="1918" y2="349.5" stroke="#6e6e6e" stroke-dasharray="3 3"/>
<line x1="807" y1="473.5" x2="1918" y2="473.5" stroke="#6e6e6e" stroke-dasharray="3 3"/>
<line x1="807" y1="411.5" x2="1918" y2="411.5" stroke="#000" stroke-width="1"/>
<line x1="807.5" y1="511" x2="807.5" y2="536" stroke="#808080"/>
<text x="809.5" y="521" class="ct">0s</text>
<line x1="1024.7" y1="511" x2="1024.7" y2="536" stroke="#808080"/>
<text x="1026.7" y="521" class="ct">10s</text>
<line x1="1241.9" y1="511" x2="1241.9" y2="536" stroke="#808080"/>
<text x="1243.9" y="521" class="ct">20s</text>
<line x1="1459.1" y1="511" x2="1459.1" y2="536" stroke="#808080"/>
<text x="1461.1" y="521" class="ct">30s</text>
<line x1="1676.3" y1="511" x2="1676.3" y2="536" stroke="#808080"/>
<text x="1678.3" y="521" class="ct">40s</text>
<line x1="1893.5" y1="511" x2="1893.5" y2="536" stroke="#808080"/>
<text x="1895.5" y="521" class="ct">50s</text>
<text x="1882" y="360" class="ct">10,2mm</text>
<text x="1882" y="484" class="ct">10,2mm</text>
<text x="824" y="298" class="ct">Anterior</text>
<text x="824" y="533" class="ct">Posterior</text>
<text x="1327" y="298" class="ct">A/P Oscillations</text>
<path d="M807,455.6 L807.4,454.2 L807.8,454 L808.2,452.5 L808.6,451.6 L809,450.6 L809.4,449.6 L809.8,448.8 L810.2,446.9 L810.6,446.3 L811,444.9 L811.4,444.5 L811.8,443.8 L812.2,442.5 L812.6,440.8 L813,439.8 L813.4,439.2 L813.8,437.1 L814.2,435.9 L814.6,434.4 L815,433.7 L815.4,432.3 L815.8,431.1 L816.2,429.4 L816.6,428.4 L817,426.8 L817.4,424.8 L817.8,423.6 L818.2,423.5 L818.6,422.1 L819,421.9 L819.4,421.2 L819.8,420.4 L820.2,419.6 L820.6,418.7 L821,417.8 L821.4,418 L821.8,417.1 L822.2,416.4 L822.6,415.7 L823,414.7 L823.4,414.2 L823.8,414 L824.2,415 L824.6,415 L825,416.1 L825.4,416.4 L825.8,418 L826.2,420 L826.6,422.7 L827,425.2 L827.4,429.8 L827.8,433.2 L828.2,437.5 L828.6,441.2 L829,445.7 L829.4,449.7 L829.8,452.7 L830.2,456.2 L830.6,457.7 L831,461.6 L831.4,462.2 L831.8,462.9 L832.2,464.1 L832.6,463.3 L833,463 L833.4,460.7 L833.8,460 L834.2,459.1 L834.6,458.4 L835,457.9 L835.4,456.8 L835.8,455.2 L836.2,453.9 L836.6,452.7 L837,450.7 L837.4,449.1 L837.8,447.5 L838.2,445.8 L838.6,444.9 L839,443.3 L839.4,441.2 L839.8,439.3 L840.2,438.6 L840.6,436.9 L841,436 L841.4,434.1 L841.8,433.3 L842.2,431.3 L842.6,431.1 L843,430.6 L843.4,430.2 L843.8,429.6 L844.2,430.6 L844.6,429.6 L845,430.5 L845.4,430.6 L845.8,431.6 L846.2,433.1 L846.6,434.1 L847,435.8 L847.4,437.7 L847.8,439.4 L848.2,442.2 L848.6,443.4 L849,445.6 L849.4,448.9 L849.8,450.5 L850.2,452.9 L850.6,454.4 L851,457.9 L851.4,460.5 L851.8,464.6 L852.2,466.7 L852.6,470.2 L853,473.3 L853.4,477.4 L853.8,480.4 L854.2,484.4 L854.6,486.8 L855,490.4 L855.4,491.9 L855.8,494.1 L856.2,495.5 L856.6,496.3 L857,497.2 L857.4,497.3 L857.8,497.3 L858.2,498.1 L858.6,498.5 L859,497.4 L859.4,497.1 L859.8,497.3 L860.2,495.6 L860.6,495.4 L861,494.9 L861.4,493.4 L861.8,492.6 L862.2,491.1 L862.6,490 L863,489.5 L863.4,487.2 L863.8,486 L864.2,484.9 L864.6,483.2 L865,481.3 L865.4,479.5 L865.8,478 L866.2,476.6 L866.6,474.9 L867,473.5 L867.4,471.8 L867.8,469.4 L868.2,467.9 L868.6,466.7 L869,464.3 L869.4,462 L869.8,460.4 L870.2,459 L870.6,456.2 L871,453.9 L871.4,451.2 L871.8,449.7 L872.2,447.6 L872.6,444.4 L873,442.6 L873.4,439.7 L873.8,437.3 L874.2,435 L874.6,432.6 L875,430.3 L875.4,427.8 L875.8,426.4 L876.2,423.2 L876.6,422 L877,419.7 L877.4,417.1 L877.8,415.8 L878.2,414.3 L878.6,412.9 L879,411.5 L879.4,411.5 L879.8,409.2 L880.2,409.3 L880.6,406.8 L881,405.4 L881.4,405.6 L881.8,405.3 L882.2,405.2 L882.6,406.7 L883,408.4 L883.4,408.7 L883.8,410 L884.2,412.2 L884.6,413.7 L885,413.7 L885.4,414.8 L885.8,414.7 L886.2,414.3 L886.6,414.2 L887,413.8 L887.4,411.9 L887.8,411.5 L888.2,410.8 L888.6,409.8 L889,408.5 L889.4,407.9 L889.8,406.4 L890.2,405.1 L890.6,403.8 L891,402 L891.4,401 L891.8,399.1 L892.2,398.3 L892.6,396.7 L893,396.9 L893.4,395.9 L893.8,394.8 L894.2,393.4 L894.6,392.2 L895,392 L895.4,391 L895.8,390.9 L896.2,390.6 L896.6,389.9 L897,390.5 L897.4,389.5 L897.8,389.4 L898.2,390.3 L898.6,390.1 L899,389.4 L899.4,390 L899.8,390 L900.2,389.7 L900.6,389.4 L901,389.8 L901.4,388.9 L901.8,388.6 L902.2,389.5 L902.6,389.1 L903,389.4 L903.4,388.8 L903.8,388.2 L904.2,389 L904.6,388.9 L905,388.7 L905.4,388.5 L905.8,389 L906.2,388.2 L906.6,388.7 L907,389.2 L907.4,388.1 L907.8,388.7 L908.2,388.6 L908.6,389.3 L909,388.6 L909.4,389.1 L909.8,388.2 L910.2,388.5 L910.6,388.5 L911,387.8 L911.4,387.7 L911.8,388.2 L912.2,388.9 L912.6,387.5 L913,386.8 L913.4,385.3 L913.8,384.8 L914.2,382.8 L914.6,381.7 L915,380.9 L915.4,379.8 L915.8,379.6 L916.2,379.5 L916.6,380.8 L917,381.5 L917.4,383.6 L917.8,385.7 L918.2,389.3 L918.6,391.9 L919,394.9 L919.4,398 L919.8,400.9 L920.2,403.6 L920.6,405.6 L921,407.1 L921.4,407.2 L921.8,407 L922.2,407.3 L922.6,407.7 L923,407.6 L923.4,406.8 L923.8,407.4 L924.2,407.1 L924.6,407.8 L925,407.6 L925.4,407.9 L925.8,407.3 L926.2,406.5 L926.6,407.1 L927,406.6 L927.4,405.4 L927.8,404.9 L928.2,405.4 L928.6,404.8 L929,403.4 L929.4,403.2 L929.8,402.5 L930.2,402.8 L930.6,402 L931,401.6 L931.4,399.9 L931.8,399.6 L932.2,399.5 L932.6,398.5 L933,397.5 L933.4,396.5 L933.8,396.7 L934.2,395.7 L934.6,394.9 L935,394.7 L935.4,393 L935.8,393.5 L936.2,391.6 L936.6,391.5 L937,389.9 L937.4,388.9 L937.8,388.4 L938.2,387.9 L938.6,386.7 L939,385.5 L939.4,385.3 L939.8,383.9 L940.2,384 L940.6,381.9 L941,380.4 L941.4,380.1 L941.8,379 L942.2,377.4 L942.6,377.7 L943,377.2 L943.4,374.4 L943.8,372.7 L944.2,373.2 L944.6,373.2 L945,369.7 L945.4,369.6 L945.8,370.1 L946.2,367.2 L946.6,367.5 L947,367.3 L947.4,365.4 L947.8,366 L948.2,365.1 L948.6,363.5 L949,362.4 L949.4,364 L949.8,363.2 L950.2,362.9 L950.6,361 L951,363.7 L951.4,359.9 L951.8,360.5 L952.2,360.2 L952.6,359.3 L953,358.8 L953.4,359.5 L953.8,358.6 L954.2,359.6 L954.6,358.3 L955,362 L955.4,358.7 L955.8,358.7 L956.2,358 L956.6,359.3 L957,357.8 L957.4,357.5 L957.8,358.2 L958.2,357.3 L958.6,358.1 L959,357.5 L959.4,358.4 L959.8,359 L960.2,358.2 L960.6,358.1 L961,358.4 L961.4,358.2 L961.8,356.9 L962.2,358 L962.6,358.4 L963,357.2 L963.4,357.8 L963.8,357.1 L964.2,357.8 L964.6,356.3 L965,357 L965.4,357 L965.8,358.2 L966.2,356.4 L966.6,358 L967,362 L967.4,359.1 L967.8,357 L968.2,358.5 L968.6,359 L969,356.9 L969.4,358.1 L969.8,357.4 L970.2,358 L970.6,357.1 L971,360 L971.4,360 L971.8,358.5 L972.2,360.7 L972.6,360.6 L973,360.9 L973.4,361.4 L973.8,361.2 L974.2,360.6 L974.6,360.4 L975,360.6 L975.4,361.8 L975.8,360.5 L976.2,361 L976.6,361.4 L977,363.2 L977.4,361.9 L977.8,362.3 L978.2,364.2 L978.6,362.4 L979,364.7 L979.4,363.8 L979.8,363.7 L980.2,365.3 L980.6,365.3 L981,364.1 L981.4,366.2 L981.8,367.3 L982.2,366.9 L982.6,367.9 L983,367.5 L983.4,366.6 L983.8,367.3 L984.2,369.2 L984.6,373.5 L985,369.3 L985.4,370.5 L985.8,369.4 L986.2,371.2 L986.6,370 L987,373.4 L987.4,372.1 L987.8,373.6 L988.2,373.4 L988.6,374.6 L989,372.8 L989.4,373.3 L989.8,373.3 L990.2,374.6 L990.6,373.9 L991,373.7 L991.4,374.9 L991.8,376.7 L992.2,376.4 L992.6,379 L993,378.3 L993.4,379 L993.8,379.1 L994.2,378.8 L994.6,377.3 L995,377.8 L995.4,380.4 L995.8,378.6 L996.2,380.9 L996.6,378.9 L997,381.1 L997.4,381.7 L997.8,382.4 L998.2,380.3 L998.6,382.5 L999,381.7 L999.4,382.9 L999.8,383.4 L1000.2,380.9 L1000.6,382.1 L1001,381.7 L1001.4,382.5 L1001.8,383.9 L1002.2,384.2 L1002.6,385.1 L1003,384.8 L1003.4,385.9 L1003.8,385.9 L1004.2,385.4 L1004.6,385.6 L1005,384.2 L1005.4,386 L1005.8,384.5 L1006.2,385 L1006.6,386.3 L1007,386.2 L1007.4,386.4 L1007.8,385.4 L1008.2,385.8 L1008.6,387.2 L1009,386.8 L1009.4,385.8 L1009.8,385.2 L1010.2,384.5 L1010.6,385.6 L1011,385.7 L1011.4,385.5 L1011.8,385.3 L1012.2,384.1 L1012.6,381.3 L1013,385.1 L1013.4,383.7 L1013.8,382.8 L1014.2,382.2 L1014.6,383.2 L1015,382.7 L1015.4,383.1 L1015.8,382.6 L1016.2,382.4 L1016.6,381.7 L1017,381.8 L1017.4,381.3 L1017.8,381.9 L1018.2,381.1 L1018.6,381.6 L1019,379.4 L1019.4,378.7 L1019.8,379.5 L1020.2,380 L1020.6,377.9 L1021,378.4 L1021.4,379.4 L1021.8,380.3 L1022.2,380.1 L1022.6,377.9 L1023,377.5 L1023.4,378.8 L1023.8,378 L1024.2,378.6 L1024.6,376.3 L1025,378 L1025.4,375.7 L1025.8,378.2 L1026.2,378.2 L1026.6,377.3 L1027,377.1 L1027.4,376.9 L1027.8,376.3 L1028.2,377.6 L1028.6,375.3 L1029,375.4 L1029.4,377.6 L1029.8,376 L1030.2,376.6 L1030.6,377.9 L1031,377.6 L1031.4,376.6 L1031.8,377.8 L1032.2,377.1 L1032.6,377.3 L1033,377.1 L1033.4,377.1 L1033.8,376.9 L1034.2,377.2 L1034.6,381.5 L1035,378.7 L1035.4,377 L1035.8,377 L1036.2,377.8 L1036.6,377.3 L1037,377.4 L1037.4,377.7 L1037.8,375.6 L1038.2,377.3 L1038.6,376.6 L1039,376 L1039.4,376.4 L1039.8,377.1 L1040.2,373.5 L1040.6,375.6 L1041,375.7 L1041.4,375.5 L1041.8,376.7 L1042.2,376 L1042.6,376.1 L1043,376.2 L1043.4,376.2 L1043.8,376.1 L1044.2,377.4 L1044.6,377.2 L1045,377.5 L1045.4,377.6 L1045.8,377.9 L1046.2,377.6 L1046.6,377.7 L1047,376.5 L1047.4,377.2 L1047.8,376.2 L1048.2,375.5 L1048.6,375.5 L1049,376.1 L1049.4,376.7 L1049.8,374.5 L1050.2,379.4 L1050.6,375 L1051,374.1 L1051.4,376.1 L1051.8,376.1 L1052.2,376.4 L1052.6,375.5 L1053,374.4 L1053.4,373.7 L1053.8,373.9 L1054.2,375.7 L1054.6,373.5 L1055,374.7 L1055.4,375.7 L1055.8,375.5 L1056.2,374 L1056.6,378.7 L1057,375.7 L1057.4,375.9 L1057.8,375.8 L1058.2,375.2 L1058.6,377 L1059,375.8 L1059.4,374.8 L1059.8,376.3 L1060.2,375.6 L1060.6,375.8 L1061,376.5 L1061.4,375.5 L1061.8,376.7 L1062.2,376.2 L1062.6,375.2 L1063,377.4 L1063.4,375.4 L1063.8,376 L1064.2,377.2 L1064.6,376.7 L1065,375.5 L1065.4,375.4 L1065.8,377.6 L1066.2,375.9 L1066.6,377.3 L1067,375.7 L1067.4,375.6 L1067.8,374.9 L1068.2,376.5 L1068.6,375.4 L1069,376 L1069.4,375.9 L1069.8,376.1 L1070.2,376.3 L1070.6,376.6 L1071,377.3 L1071.4,376.2 L1071.8,377 L1072.2,377.1 L1072.6,379.8 L1073,378.1 L1073.4,377.1 L1073.8,378.1 L1074.2,378.1 L1074.6,378.5 L1075,380.2 L1075.4,378.1 L1075.8,379.1 L1076.2,380.2 L1076.6,377.8 L1077,379.3 L1077.4,379.3 L1077.8,380.4 L1078.2,381 L1078.6,379.7 L1079,380.2 L1079.4,381.8 L1079.8,381.5 L1080.2,381.6 L1080.6,382.2 L1081,382.4 L1081.4,382.2 L1081.8,380.1 L1082.2,379.9 L1082.6,379.7 L1083,381.3 L1083.4,382.5 L1083.8,381.5 L1084.2,379.4 L1084.6,381.4 L1085,377.5 L1085.4,381 L1085.8,380.3 L1086.2,379.9 L1086.6,378.7 L1087,378.6 L1087.4,376.7 L1087.8,378.1 L1088.2,377.8 L1088.6,377.4 L1089,381.4 L1089.4,376.7 L1089.8,377.4 L1090.2,379.2 L1090.6,378.6 L1091,375.9 L1091.4,376.2 L1091.8,376 L1092.2,376.8 L1092.6,376.2 L1093,376.8 L1093.4,376.6 L1093.8,375.8 L1094.2,375.5 L1094.6,372.7 L1095,375.8 L1095.4,374.7 L1095.8,375 L1096.2,375.2 L1096.6,373.8 L1097,373.1 L1097.4,373.9 L1097.8,373.7 L1098.2,372.8 L1098.6,372.6 L1099,371.8 L1099.4,372.3 L1099.8,372.1 L1100.2,372.4 L1100.6,371.9 L1101,371.5 L1101.4,371.8 L1101.8,370.8 L1102.2,370.8 L1102.6,369.9 L1103,369.8 L1103.4,367.8 L1103.8,368.5 L1104.2,369.5 L1104.6,369.6 L1105,367.7 L1105.4,368.9 L1105.8,368.2 L1106.2,367.4 L1106.6,370.1 L1107,368.7 L1107.4,368.2 L1107.8,368.3 L1108.2,368 L1108.6,369 L1109,371 L1109.4,368.4 L1109.8,369.2 L1110.2,368.7 L1110.6,369.2 L1111,368.6 L1111.4,369.5 L1111.8,367.6 L1112.2,367.8 L1112.6,369.6 L1113,367.8 L1113.4,367 L1113.8,369 L1114.2,367 L1114.6,367 L1115,367 L1115.4,369.2 L1115.8,368.2 L1116.2,368.5 L1116.6,367.9 L1117,368.1 L1117.4,367.2 L1117.8,368.9 L1118.2,367.6 L1118.6,368.3 L1119,367.3 L1119.4,369.3 L1119.8,367.5 L1120.2,366.8 L1120.6,368.2 L1121,367.3 L1121.4,368.3 L1121.8,369.3 L1122.2,369.4 L1122.6,368.8 L1123,369 L1123.4,368.3 L1123.8,367 L1124.2,368.6 L1124.6,367.1 L1125,368.6 L1125.4,368.8 L1125.8,368.3 L1126.2,368.4 L1126.6,367.5 L1127,367.2 L1127.4,369.5 L1127.8,367.9 L1128.2,368.9 L1128.6,369.5 L1129,369.7 L1129.4,369 L1129.8,369.3 L1130.2,366.4 L1130.6,368.4 L1131,370.7 L1131.4,368.2 L1131.8,369.8 L1132.2,368.1 L1132.6,368.8 L1133,367.8 L1133.4,370 L1133.8,369 L1134.2,370 L1134.6,367.5 L1135,369.9 L1135.4,372.5 L1135.8,370.3 L1136.2,369.2 L1136.6,369.9 L1137,368 L1137.4,368.4 L1137.8,369.1 L1138.2,370.2 L1138.6,370.5 L1139,371.1 L1139.4,371 L1139.8,371.9 L1140.2,369.7 L1140.6,370.6 L1141,370.6 L1141.4,370.3 L1141.8,369.8 L1142.2,369.7 L1142.6,369.5 L1143,369.9 L1143.4,369.1 L1143.8,371.6 L1144.2,370.8 L1144.6,369.4 L1145,368.8 L1145.4,370 L1145.8,369.5 L1146.2,369.7 L1146.6,371.2 L1147,372.4 L1147.4,370.5 L1147.8,371.9 L1148.2,372.1 L1148.6,370.3 L1149,371 L1149.4,372.4 L1149.8,371.4 L1150.2,369.9 L1150.6,371.2 L1151,369 L1151.4,371.6 L1151.8,369.3 L1152.2,368.7 L1152.6,371.5 L1153,371.4 L1153.4,371.6 L1153.8,372.3 L1154.2,371.3 L1154.6,372.5 L1155,372.2 L1155.4,372.8 L1155.8,371.7 L1156.2,372.2 L1156.6,372.4 L1157,372.2 L1157.4,372.6 L1157.8,371.5 L1158.2,371.6 L1158.6,372.6 L1159,373.3 L1159.4,371.4 L1159.8,373.5 L1160.2,374.3 L1160.6,373.7 L1161,373.7 L1161.4,373.3 L1161.8,372.6 L1162.2,373.7 L1162.6,373.7 L1163,375.6 L1163.4,373.1 L1163.8,372.4 L1164.2,372.3 L1164.6,373.1 L1165,374.7 L1165.4,372.4 L1165.8,373.3 L1166.2,372.6 L1166.6,374.1 L1167,372.7 L1167.4,373.3 L1167.8,372.8 L1168.2,372.6 L1168.6,373.9 L1169,373.5 L1169.4,373.8 L1169.8,372.5 L1170.2,374 L1170.6,372.1 L1171,373.4 L1171.4,372 L1171.8,374.6 L1172.2,372.2 L1172.6,373.8 L1173,375 L1173.4,374 L1173.8,373.3 L1174.2,375 L1174.6,375.3 L1175,373.7 L1175.4,375 L1175.8,373.4 L1176.2,373.1 L1176.6,375.5 L1177,374.5 L1177.4,373.5 L1177.8,373.6 L1178.2,375.1 L1178.6,375.3 L1179,374.8 L1179.4,374.3 L1179.8,375.3 L1180.2,375.2 L1180.6,375.1 L1181,374 L1181.4,374.5 L1181.8,372.8 L1182.2,373.8 L1182.6,375 L1183,372.8 L1183.4,373.7 L1183.8,375.1 L1184.2,375 L1184.6,374.1 L1185,374.3 L1185.4,373.7 L1185.8,374.3 L1186.2,373.8 L1186.6,375.3 L1187,373.3 L1187.4,374.5 L1187.8,374.2 L1188.2,374.5 L1188.6,375.6 L1189,374.5 L1189.4,375.4 L1189.8,374.3 L1190.2,375.7 L1190.6,375.4 L1191,374.7 L1191.4,373.6 L1191.8,375.3 L1192.2,375.4 L1192.6,375.2 L1193,374.5 L1193.4,374.7 L1193.8,373.9 L1194.2,373.9 L1194.6,375.1 L1195,375.5 L1195.4,373.6 L1195.8,374.3 L1196.2,373.3 L1196.6,375.4 L1197,374.7 L1197.4,373.8 L1197.8,374.2 L1198.2,373.7 L1198.6,373.1 L1199,373.2 L1199.4,372 L1199.8,373.7 L1200.2,372.1 L1200.6,372.7 L1201,374.2 L1201.4,371.9 L1201.8,371.4 L1202.2,373 L1202.6,373.6 L1203,372.9 L1203.4,374.9 L1203.8,373.9 L1204.2,374.7 L1204.6,372.8 L1205,374 L1205.4,373.5 L1205.8,372.9 L1206.2,373.3 L1206.6,373.9 L1207,374.3 L1207.4,374.1 L1207.8,372 L1208.2,377.2 L1208.6,372.8 L1209,373.3 L1209.4,372.6 L1209.8,373.3 L1210.2,373.6 L1210.6,374.2 L1211,369.4 L1211.4,373.5 L1211.8,373.7 L1212.2,373.9 L1212.6,373.6 L1213,372.7 L1213.4,373 L1213.8,372 L1214.2,373.8 L1214.6,373.3 L1215,372.5 L1215.4,371.6 L1215.8,373.3 L1216.2,371.7 L1216.6,371.9 L1217,373.1 L1217.4,371.8 L1217.8,375.9 L1218.2,371.1 L1218.6,371.2 L1219,371.6 L1219.4,370.9 L1219.8,370.6 L1220.2,372.4 L1220.6,372 L1221,370.5 L1221.4,371.8 L1221.8,370.6 L1222.2,370.4 L1222.6,371.2 L1223,369 L1223.4,371.2 L1223.8,368.9 L1224.2,369.8 L1224.6,372.4 L1225,371.7 L1225.4,369.8 L1225.8,370.1 L1226.2,369.9 L1226.6,371 L1227,368.8 L1227.4,368.9 L1227.8,371.2 L1228.2,370.4 L1228.6,370.7 L1229,370.1 L1229.4,369.6 L1229.8,368.5 L1230.2,370.6 L1230.6,368.4 L1231,368.6 L1231.4,369.6 L1231.8,369.4 L1232.2,370 L1232.6,370 L1233,370.8 L1233.4,369.4 L1233.8,371.1 L1234.2,370.3 L1234.6,370.5 L1235,368.8 L1235.4,368.3 L1235.8,368 L1236.2,369.4 L1236.6,370.7 L1237,367.1 L1237.4,367.5 L1237.8,368.9 L1238.2,369.8 L1238.6,368.7 L1239,369.3 L1239.4,369.9 L1239.8,367.5 L1240.2,369.1 L1240.6,368 L1241,368.7 L1241.4,368.2 L1241.8,368 L1242.2,368 L1242.6,367.6 L1243,367.8 L1243.4,366.8 L1243.8,368.5 L1244.2,367.4 L1244.6,367.8 L1245,365.9 L1245.4,365.8 L1245.8,367 L1246.2,366.2 L1246.6,365.8 L1247,366.8 L1247.4,367 L1247.8,365.3 L1248.2,365.6 L1248.6,366 L1249,365 L1249.4,364.4 L1249.8,364.9 L1250.2,364.7 L1250.6,365 L1251,363.2 L1251.4,363.9 L1251.8,363.9 L1252.2,362.7 L1252.6,363 L1253,363.7 L1253.4,362.7 L1253.8,363.6 L1254.2,363.6 L1254.6,364.3 L1255,363.7 L1255.4,362.7 L1255.8,362.4 L1256.2,362 L1256.6,364.6 L1257,361.4 L1257.4,362.5 L1257.8,361.4 L1258.2,360.8 L1258.6,360.7 L1259,361.1 L1259.4,357.6 L1259.8,361 L1260.2,359.7 L1260.6,359.4 L1261,360.4 L1261.4,361.3 L1261.8,360.2 L1262.2,359.5 L1262.6,359 L1263,360.6 L1263.4,359.2 L1263.8,360.1 L1264.2,359.9 L1264.6,360.8 L1265,358.9 L1265.4,358.7 L1265.8,358.5 L1266.2,357.9 L1266.6,357.3 L1267,358.2 L1267.4,357.8 L1267.8,357.2 L1268.2,357.3 L1268.6,357.1 L1269,358.5 L1269.4,357.2 L1269.8,356.6 L1270.2,357 L1270.6,357 L1271,357 L1271.4,360 L1271.8,356.2 L1272.2,356.1 L1272.6,355.8 L1273,355.8 L1273.4,356.7 L1273.8,356.4 L1274.2,358.3 L1274.6,357.1 L1275,358 L1275.4,356.9 L1275.8,356.5 L1276.2,356.7 L1276.6,356.9 L1277,357.5 L1277.4,356.4 L1277.8,358.4 L1278.2,356.9 L1278.6,357 L1279,358 L1279.4,356.8 L1279.8,356.3 L1280.2,357.2 L1280.6,357.5 L1281,357.6 L1281.4,357.4 L1281.8,357.1 L1282.2,358.3 L1282.6,357.2 L1283,355.5 L1283.4,358.4 L1283.8,358.4 L1284.2,356.4 L1284.6,356.7 L1285,356.3 L1285.4,358.3 L1285.8,357.6 L1286.2,358.2 L1286.6,358.6 L1287,358.7 L1287.4,358.6 L1287.8,353.1 L1288.2,356.9 L1288.6,355.5 L1289,355.9 L1289.4,357.5 L1289.8,358.1 L1290.2,357.1 L1290.6,356.5 L1291,357.7 L1291.4,356.3 L1291.8,356.7 L1292.2,356.1 L1292.6,356.5 L1293,356.6 L1293.4,356.2 L1293.8,356 L1294.2,357.3 L1294.6,356.5 L1295,357.4 L1295.4,357.3 L1295.8,357.7 L1296.2,356.1 L1296.6,357.4 L1297,354.3 L1297.4,356.7 L1297.8,358.6 L1298.2,358.1 L1298.6,356.7 L1299,358.4 L1299.4,356.6 L1299.8,356.5 L1300.2,356.3 L1300.6,356.1 L1301,356.4 L1301.4,356.7 L1301.8,355.5 L1302.2,357.2 L1302.6,356.9 L1303,360.5 L1303.4,356.3 L1303.8,359.5 L1304.2,356.2 L1304.6,359.8 L1305,356.6 L1305.4,356.6 L1305.8,357.1 L1306.2,358.1 L1306.6,358 L1307,358.2 L1307.4,356.9 L1307.8,358.1 L1308.2,357.7 L1308.6,357.3 L1309,358.8 L1309.4,357.5 L1309.8,358.3 L1310.2,358.5 L1310.6,358.5 L1311,356.8 L1311.4,358 L1311.8,357.1 L1312.2,358.4 L1312.6,356.8 L1313,357.9 L1313.4,359 L1313.8,357.1 L1314.2,357.6 L1314.6,358.3 L1315,357.9 L1315.4,353.9 L1315.8,355.5 L1316.2,358 L1316.6,357.5 L1317,356.2 L1317.4,358 L1317.8,357.8 L1318.2,356.5 L1318.6,357.2 L1319,356.3 L1319.4,356.9 L1319.8,355.3 L1320.2,357.1 L1320.6,357.4 L1321,357.4 L1321.4,355.8 L1321.8,357.7 L1322.2,356.6 L1322.6,356.3 L1323,354.8 L1323.4,356.6 L1323.8,357.5 L1324.2,357.1 L1324.6,356.6 L1325,357.2 L1325.4,355.1 L1325.8,356.6 L1326.2,357 L1326.6,355.8 L1327,355.3 L1327.4,358.3 L1327.8,357.2 L1328.2,357.3 L1328.6,357.4 L1329,356.5 L1329.4,356.6 L1329.8,358.3 L1330.2,358.7 L1330.6,358.3 L1331,358.7 L1331.4,358.9 L1331.8,357.3 L1332.2,359.2 L1332.6,357.9 L1333,357.9 L1333.4,357.3 L1333.8,357.9 L1334.2,358.1 L1334.6,358.5 L1335,357.1 L1335.4,358.9 L1335.8,359.4 L1336.2,357.2 L1336.6,358.4 L1337,358.8 L1337.4,357.3 L1337.8,357.5 L1338.2,357.4 L1338.6,357.6 L1339,357.2 L1339.4,359.5 L1339.8,357.3 L1340.2,357.4 L1340.6,357.7 L1341,357.9 L1341.4,357.9 L1341.8,358.5 L1342.2,358.3 L1342.6,357.5 L1343,358 L1343.4,356.3 L1343.8,353.1 L1344.2,356.9 L1344.6,358.5 L1345,357.5 L1345.4,357.8 L1345.8,358.2 L1346.2,358 L1346.6,358.4 L1347,360.4 L1347.4,358.6 L1347.8,358.2 L1348.2,357.3 L1348.6,357.8 L1349,358.9 L1349.4,358 L1349.8,358.9 L1350.2,358.6 L1350.6,357 L1351,358.3 L1351.4,359.3 L1351.8,356.6 L1352.2,357.6 L1352.6,358.9 L1353,357.5 L1353.4,358.3 L1353.8,357 L1354.2,357.8 L1354.6,358 L1355,356.5 L1355.4,357.6 L1355.8,357.6 L1356.2,358.6 L1356.6,357.3 L1357,357.9 L1357.4,357.7 L1357.8,355.9 L1358.2,357.7 L1358.6,357.6 L1359,358 L1359.4,357.1 L1359.8,357.8 L1360.2,356.9 L1360.6,356 L1361,357 L1361.4,357.4 L1361.8,358.7 L1362.2,358 L1362.6,357.3 L1363,359.2 L1363.4,358.5 L1363.8,358.5 L1364.2,356.5 L1364.6,357.6 L1365,357.1 L1365.4,357.2 L1365.8,357.2 L1366.2,358.3 L1366.6,356.6 L1367,356.8 L1367.4,357.8 L1367.8,358.9 L1368.2,357.7 L1368.6,357.9 L1369,356.5 L1369.4,357 L1369.8,358.7 L1370.2,357.9 L1370.6,358.2 L1371,360.1 L1371.4,358.7 L1371.8,358.9 L1372.2,360.2 L1372.6,357.7 L1373,359.7 L1373.4,359.5 L1373.8,358.7 L1374.2,359.3 L1374.6,359.5 L1375,357.7 L1375.4,358.2 L1375.8,358.8 L1376.2,359.1 L1376.6,360.4 L1377,359.7 L1377.4,359 L1377.8,358.6 L1378.2,360.4 L1378.6,359.7 L1379,359.1 L1379.4,358.1 L1379.8,359.8 L1380.2,358.8 L1380.6,358.8 L1381,362 L1381.4,358.9 L1381.8,361.1 L1382.2,360.1 L1382.6,359.1 L1383,359.2 L1383.4,359.1 L1383.8,358.5 L1384.2,358.1 L1384.6,358.8 L1385,357.6 L1385.4,359 L1385.8,358.9 L1386.2,358.9 L1386.6,358.7 L1387,359.8 L1387.4,359.6 L1387.8,357.9 L1388.2,358.2 L1388.6,359.5 L1389,358.9 L1389.4,357.9 L1389.8,357.9 L1390.2,357.8 L1390.6,359.5 L1391,359.9 L1391.4,356.9 L1391.8,359 L1392.2,357.8 L1392.6,359.7 L1393,358.6 L1393.4,359.4 L1393.8,358.2 L1394.2,357.8 L1394.6,358.2 L1395,357.6 L1395.4,358.3 L1395.8,359.1 L1396.2,360.2 L1396.6,357.8 L1397,358.3 L1397.4,358.4 L1397.8,356.8 L1398.2,357.2 L1398.6,358.1 L1399,357 L1399.4,356.8 L1399.8,356.2 L1400.2,360.9 L1400.6,358.1 L1401,356.5 L1401.4,357.6 L1401.8,357.8 L1402.2,355.9 L1402.6,358.3 L1403,357.6 L1403.4,358 L1403.8,354.9 L1404.2,356.9 L1404.6,356.3 L1405,356.4 L1405.4,356.2 L1405.8,356.5 L1406.2,357 L1406.6,351.8 L1407,354.5 L1407.4,355 L1407.8,354.5 L1408.2,356.1 L1408.6,355.1 L1409,354.7 L1409.4,356.9 L1409.8,351.9 L1410.2,358.3 L1410.6,354.7 L1411,355.3 L1411.4,353.5 L1411.8,353.1 L1412.2,353.4 L1412.6,354 L1413,354.4 L1413.4,354.4 L1413.8,353.6 L1414.2,352.9 L1414.6,353.1 L1415,353.6 L1415.4,351.8 L1415.8,352.6 L1416.2,352.8 L1416.6,353.3 L1417,351.8 L1417.4,352.4 L1417.8,351.3 L1418.2,351.6 L1418.6,351.3 L1419,350.9 L1419.4,351.6 L1419.8,349.5 L1420.2,349.2 L1420.6,348.9 L1421,348.9 L1421.4,349.9 L1421.8,349.8 L1422.2,350.1 L1422.6,348 L1423,347.4 L1423.4,348.2 L1423.8,350.9 L1424.2,347.8 L1424.6,347.6 L1425,347.8 L1425.4,347.7 L1425.8,349.9 L1426.2,348.1 L1426.6,347.3 L1427,348 L1427.4,349.3 L1427.8,348.5 L1428.2,344.1 L1428.6,347.3 L1429,346.7 L1429.4,345.8 L1429.8,346 L1430.2,345.8 L1430.6,347.2 L1431,346.9 L1431.4,347.9 L1431.8,347.3 L1432.2,346.8 L1432.6,348.2 L1433,348.5 L1433.4,348.1 L1433.8,346.7 L1434.2,346.1 L1434.6,346.4 L1435,346.6 L1435.4,346.6 L1435.8,345.5 L1436.2,345.7 L1436.6,345.9 L1437,346.4 L1437.4,346 L1437.8,347 L1438.2,345.4 L1438.6,345.3 L1439,347.6 L1439.4,346 L1439.8,347.6 L1440.2,346.3 L1440.6,347.4 L1441,347 L1441.4,346.7 L1441.8,347.3 L1442.2,348.1 L1442.6,344.8 L1443,347.4 L1443.4,346.9 L1443.8,346.7 L1444.2,346.9 L1444.6,347.2 L1445,346.7 L1445.4,348.6 L1445.8,346 L1446.2,348.4 L1446.6,348.3 L1447,348.3 L1447.4,347.7 L1447.8,348.1 L1448.2,347.5 L1448.6,348.3 L1449,348.7 L1449.4,348.7 L1449.8,347.7 L1450.2,349.4 L1450.6,348 L1451,349.2 L1451.4,350.3 L1451.8,348.3 L1452.2,348.4 L1452.6,349.6 L1453,349.2 L1453.4,350.3 L1453.8,346.9 L1454.2,349.2 L1454.6,348.1 L1455,349.1 L1455.4,348.5 L1455.8,349.9 L1456.2,348.1 L1456.6,349.6 L1457,349.5 L1457.4,349.6 L1457.8,347.7 L1458.2,349.3 L1458.6,348.3 L1459,347.9 L1459.4,349.2 L1459.8,347.7 L1460.2,347.8 L1460.6,346.8 L1461,348.4 L1461.4,348 L1461.8,349.3 L1462.2,349.8 L1462.6,350.3 L1463,348.4 L1463.4,349.8 L1463.8,350 L1464.2,349.7 L1464.6,349 L1465,350.6 L1465.4,349.6 L1465.8,347.9 L1466.2,348.6 L1466.6,350 L1467,351.4 L1467.4,348.3 L1467.8,348.3 L1468.2,348.6 L1468.6,352.3 L1469,348.7 L1469.4,347.4 L1469.8,347.1 L1470.2,347.8 L1470.6,348.4 L1471,349.3 L1471.4,349.3 L1471.8,349.9 L1472.2,348.8 L1472.6,349.9 L1473,350 L1473.4,349.2 L1473.8,350.9 L1474.2,349.7 L1474.6,349.6 L1475,350.3 L1475.4,350.1 L1475.8,350.2 L1476.2,351 L1476.6,349.6 L1477,351.8 L1477.4,351.5 L1477.8,351 L1478.2,352.7 L1478.6,351.1 L1479,352.4 L1479.4,352.4 L1479.8,350.3 L1480.2,351.1 L1480.6,349.2 L1481,351 L1481.4,351.8 L1481.8,353 L1482.2,353 L1482.6,351 L1483,351.7 L1483.4,352.5 L1483.8,351.8 L1484.2,350.9 L1484.6,351.8 L1485,351.4 L1485.4,351.1 L1485.8,350.1 L1486.2,350.4 L1486.6,351.3 L1487,351.4 L1487.4,352.2 L1487.8,351.5 L1488.2,350.8 L1488.6,350.6 L1489,349.3 L1489.4,349.4 L1489.8,349.1 L1490.2,349.2 L1490.6,349.8 L1491,348.8 L1491.4,349.2 L1491.8,352.4 L1492.2,349.1 L1492.6,348.7 L1493,346.6 L1493.4,350.7 L1493.8,349.9 L1494.2,348.9 L1494.6,349.7 L1495,351 L1495.4,349.5 L1495.8,349 L1496.2,348.8 L1496.6,348.9 L1497,347.4 L1497.4,348.3 L1497.8,348.1 L1498.2,346.2 L1498.6,345.1 L1499,345.2 L1499.4,344 L1499.8,344.7 L1500.2,344.5 L1500.6,344.4 L1501,344.5 L1501.4,345 L1501.8,345.2 L1502.2,343.2 L1502.6,345.5 L1503,343.7 L1503.4,343.3 L1503.8,344.4 L1504.2,344.1 L1504.6,340.4 L1505,345 L1505.4,344.7 L1505.8,342.5 L1506.2,343.4 L1506.6,344.4 L1507,344 L1507.4,343.6 L1507.8,341.8 L1508.2,342.1 L1508.6,342 L1509,342.2 L1509.4,342.5 L1509.8,343.1 L1510.2,340.1 L1510.6,341.6 L1511,341.7 L1511.4,342.2 L1511.8,340.5 L1512.2,341.5 L1512.6,340.3 L1513,340.9 L1513.4,342 L1513.8,341.1 L1514.2,342 L1514.6,341.7 L1515,339.9 L1515.4,341.3 L1515.8,341.3 L1516.2,341.9 L1516.6,340.3 L1517,341 L1517.4,338.4 L1517.8,340.4 L1518.2,340.3 L1518.6,340.6 L1519,342.1 L1519.4,341.2 L1519.8,341.7 L1520.2,343.2 L1520.6,342.7 L1521,341.9 L1521.4,341.4 L1521.8,342.3 L1522.2,343.8 L1522.6,342.6 L1523,343.2 L1523.4,344.1 L1523.8,342.4 L1524.2,344.2 L1524.6,343.5 L1525,344 L1525.4,343.2 L1525.8,342.1 L1526.2,344.3 L1526.6,343.8 L1527,342.4 L1527.4,343.5 L1527.8,342.4 L1528.2,342.5 L1528.6,342.8 L1529,342.8 L1529.4,342.6 L1529.8,343.6 L1530.2,342.5 L1530.6,344.8 L1531,342.8 L1531.4,343.2 L1531.8,342.2 L1532.2,344 L1532.6,345.3 L1533,343.3 L1533.4,345.8 L1533.8,344.4 L1534.2,345.1 L1534.6,345.6 L1535,349.5 L1535.4,345.4 L1535.8,343.5 L1536.2,344.2 L1536.6,345.9 L1537,344.6 L1537.4,345 L1537.8,346.2 L1538.2,344.6 L1538.6,346 L1539,344 L1539.4,345.2 L1539.8,345.5 L1540.2,346.2 L1540.6,346.7 L1541,346.3 L1541.4,345.1 L1541.8,346.9 L1542.2,345.3 L1542.6,346.8 L1543,347.1 L1543.4,346.2 L1543.8,345.4 L1544.2,346.8 L1544.6,345.6 L1545,345.6 L1545.4,347.2 L1545.8,345.2 L1546.2,347.7 L1546.6,345.8 L1547,346.2 L1547.4,346.5 L1547.8,346.4 L1548.2,347.2 L1548.6,351.4 L1549,346.3 L1549.4,347.5 L1549.8,346.4 L1550.2,346.7 L1550.6,348 L1551,347.9 L1551.4,347.8 L1551.8,346.5 L1552.2,346.2 L1552.6,346.8 L1553,348.7 L1553.4,346.4 L1553.8,348.5 L1554.2,347 L1554.6,348.6 L1555,346.8 L1555.4,348.5 L1555.8,347.3 L1556.2,344.6 L1556.6,348.5 L1557,346.9 L1557.4,347.4 L1557.8,348.8 L1558.2,347.9 L1558.6,348.5 L1559,346.9 L1559.4,348.3 L1559.8,349.2 L1560.2,349.4 L1560.6,348.4 L1561,348 L1561.4,349.6 L1561.8,350.4 L1562.2,350.1 L1562.6,349.4 L1563,349.9 L1563.4,348.3 L1563.8,348.1 L1564.2,347.7 L1564.6,348.1 L1565,349.5 L1565.4,348.5 L1565.8,349.9 L1566.2,348.8 L1566.6,349.2 L1567,350.3 L1567.4,351 L1567.8,353.5 L1568.2,350.5 L1568.6,350.6 L1569,352 L1569.4,349.9 L1569.8,350.6 L1570.2,351.2 L1570.6,350.8 L1571,351.6 L1571.4,353.1 L1571.8,353.2 L1572.2,353 L1572.6,352.7 L1573,352 L1573.4,354.6 L1573.8,351.8 L1574.2,354.1 L1574.6,353.1 L1575,353 L1575.4,352.4 L1575.8,352.1 L1576.2,352.2 L1576.6,352.7 L1577,352.6 L1577.4,355.1 L1577.8,353.1 L1578.2,353.7 L1578.6,352.1 L1579,354.5 L1579.4,352.5 L1579.8,353.3 L1580.2,353.1 L1580.6,353.4 L1581,351.4 L1581.4,351.7 L1581.8,351 L1582.2,351.4 L1582.6,352.1 L1583,350.7 L1583.4,350 L1583.8,349.8 L1584.2,352.5 L1584.6,351.4 L1585,351.5 L1585.4,351.3 L1585.8,349.4 L1586.2,347.3 L1586.6,350.1 L1587,349.8 L1587.4,349.9 L1587.8,349.5 L1588.2,349.1 L1588.6,349.3 L1589,347.9 L1589.4,346.6 L1589.8,347.4 L1590.2,348.4 L1590.6,348 L1591,345 L1591.4,346.9 L1591.8,347.8 L1592.2,345.6 L1592.6,347.7 L1593,347.7 L1593.4,348 L1593.8,347.8 L1594.2,345.7 L1594.6,348 L1595,347.2 L1595.4,348.6 L1595.8,348.3 L1596.2,347 L1596.6,349.1 L1597,348.4 L1597.4,348.9 L1597.8,347.6 L1598.2,348.7 L1598.6,348.4 L1599,348.6 L1599.4,348.8 L1599.8,351 L1600.2,346.8 L1600.6,349.4 L1601,351.7 L1601.4,348.1 L1601.8,348.1 L1602.2,349.5 L1602.6,349.1 L1603,349.7 L1603.4,349.2 L1603.8,350.9 L1604.2,350.1 L1604.6,350 L1605,349.3 L1605.4,350.7 L1605.8,350.8 L1606.2,350 L1606.6,349.2 L1607,350.4 L1607.4,350.2 L1607.8,350.1 L1608.2,350.9 L1608.6,350.7 L1609,350.5 L1609.4,350.2 L1609.8,349.7 L1610.2,349.9 L1610.6,351.7 L1611,347.6 L1611.4,350.9 L1611.8,351.6 L1612.2,352.1 L1612.6,352 L1613,353.1 L1613.4,353.1 L1613.8,353.2 L1614.2,354.2 L1614.6,352.8 L1615,353.8 L1615.4,353.2 L1615.8,354.2 L1616.2,352.9 L1616.6,354.1 L1617,353.1 L1617.4,352.8 L1617.8,354.6 L1618.2,351 L1618.6,354.4 L1619,353.7 L1619.4,355.9 L1619.8,354 L1620.2,354.2 L1620.6,355.4 L1621,354.7 L1621.4,353.5 L1621.8,354.9 L1622.2,354.7 L1622.6,355.5 L1623,355.2 L1623.4,353.3 L1623.8,353.9 L1624.2,353.5 L1624.6,352.9 L1625,351.6 L1625.4,352.6 L1625.8,353 L1626.2,351.2 L1626.6,351.4 L1627,352.5 L1627.4,350.6 L1627.8,350.5 L1628.2,350.3 L1628.6,348.6 L1629,348.5 L1629.4,347.1 L1629.8,346.5 L1630.2,346.7 L1630.6,346.9 L1631,346.8 L1631.4,347.7 L1631.8,345.4 L1632.2,344.8 L1632.6,343.5 L1633,342.5 L1633.4,342.6 L1633.8,342.4 L1634.2,342.6 L1634.6,340.8 L1635,341.5 L1635.4,338.9 L1635.8,340 L1636.2,338.5 L1636.6,337.2 L1637,334.9 L1637.4,334.7 L1637.8,335.8 L1638.2,334.4 L1638.6,333.1 L1639,332.6 L1639.4,330.4 L1639.8,329.2 L1640.2,331.2 L1640.6,330.6 L1641,328 L1641.4,328.1 L1641.8,325.9 L1642.2,322.9 L1642.6,324.4 L1643,325.9 L1643.4,324.7 L1643.8,323.1 L1644.2,323.9 L1644.6,323.3 L1645,323.6 L1645.4,323.2 L1645.8,325.1 L1646.2,324.1 L1646.6,323.5 L1647,324.2 L1647.4,324.6 L1647.8,321.1 L1648.2,323.2 L1648.6,325.5 L1649,324.3 L1649.4,323.9 L1649.8,325.6 L1650.2,323.3 L1650.6,326.2 L1651,328.8 L1651.4,326.5 L1651.8,327.5 L1652.2,325.9 L1652.6,329.6 L1653,330.6 L1653.4,331.1 L1653.8,330.4 L1654.2,330.3 L1654.6,332 L1655,332.3 L1655.4,333.6 L1655.8,333.8 L1656.2,334.9 L1656.6,335.2 L1657,334.4 L1657.4,336.2 L1657.8,335.4 L1658.2,337.6 L1658.6,337.4 L1659,336.2 L1659.4,336.6 L1659.8,333.6 L1660.2,338.6 L1660.6,336.6 L1661,339 L1661.4,339.5 L1661.8,339.6 L1662.2,339.2 L1662.6,341.7 L1663,340.1 L1663.4,340.8 L1663.8,341.6 L1664.2,342.6 L1664.6,341.4 L1665,341.5 L1665.4,340.5 L1665.8,342 L1666.2,341.7 L1666.6,341.6 L1667,342.7 L1667.4,342.4 L1667.8,342.2 L1668.2,343.7 L1668.6,342.9 L1669,341.6 L1669.4,343 L1669.8,343.3 L1670.2,342.2 L1670.6,342 L1671,342.1 L1671.4,342.5 L1671.8,340.5 L1672.2,341.3 L1672.6,339.9 L1673,341.3 L1673.4,342 L1673.8,341 L1674.2,340.2 L1674.6,341.5 L1675,339.6 L1675.4,339.2 L1675.8,340.6 L1676.2,340.5 L1676.6,340.2 L1677,339.6 L1677.4,340 L1677.8,340.5 L1678.2,340.3 L1678.6,339.8 L1679,339.3 L1679.4,339.9 L1679.8,340.3 L1680.2,341 L1680.6,337.3 L1681,339.8 L1681.4,341 L1681.8,340 L1682.2,339.3 L1682.6,340.8 L1683,341 L1683.4,339.8 L1683.8,339.9 L1684.2,339.8 L1684.6,340.4 L1685,341 L1685.4,341.6 L1685.8,342.1 L1686.2,341.6 L1686.6,339.8 L1687,341 L1687.4,341.5 L1687.8,340.9 L1688.2,342.2 L1688.6,340.1 L1689,341.4 L1689.4,343.2 L1689.8,341.2 L1690.2,339.6 L1690.6,338 L1691,341.5 L1691.4,340.2 L1691.8,339.5 L1692.2,342 L1692.6,341.8 L1693,340.2 L1693.4,342.2 L1693.8,342.2 L1694.2,340.8 L1694.6,342.3 L1695,341 L1695.4,341.4 L1695.8,342.9 L1696.2,338.3 L1696.6,342 L1697,343.3 L1697.4,343.5 L1697.8,342.3 L1698.2,343.2 L1698.6,342.1 L1699,343 L1699.4,341.9 L1699.8,343.9 L1700.2,342 L1700.6,344 L1701,343.8 L1701.4,343.7 L1701.8,348.5 L1702.2,344.3 L1702.6,344.3 L1703,343.9 L1703.4,344.7 L1703.8,343.6 L1704.2,343.3 L1704.6,343.3 L1705,343.6 L1705.4,345.7 L1705.8,343.7 L1706.2,343.6 L1706.6,345.1 L1707,344.5 L1707.4,343.6 L1707.8,344.3 L1708.2,345.8 L1708.6,345.1 L1709,345.7 L1709.4,344 L1709.8,344.1 L1710.2,346.5 L1710.6,346 L1711,345.1 L1711.4,344.5 L1711.8,346.1 L1712.2,345.2 L1712.6,344.5 L1713,345.1 L1713.4,344.5 L1713.8,345.8 L1714.2,344.5 L1714.6,344.3 L1715,344.8 L1715.4,344.3 L1715.8,345.5 L1716.2,345.9 L1716.6,345.3 L1717,344.8 L1717.4,343.7 L1717.8,345.6 L1718.2,344.4 L1718.6,346.1 L1719,344.8 L1719.4,344.7 L1719.8,346.5 L1720.2,345 L1720.6,346.4 L1721,345.9 L1721.4,344.2 L1721.8,345.5 L1722.2,346.7 L1722.6,346.3 L1723,349.7 L1723.4,344.8 L1723.8,346.2 L1724.2,346.5 L1724.6,346.3 L1725,347.8 L1725.4,347.3 L1725.8,347.2 L1726.2,346.2 L1726.6,347.7 L1727,348.3 L1727.4,348.5 L1727.8,346.7 L1728.2,346.7 L1728.6,347.2 L1729,348 L1729.4,347.6 L1729.8,348.1 L1730.2,347.6 L1730.6,349.8 L1731,349.7 L1731.4,350 L1731.8,348.4 L1732.2,348.8 L1732.6,349.9 L1733,348.5 L1733.4,348.2 L1733.8,348.3 L1734.2,347.9 L1734.6,349.6 L1735,345.1 L1735.4,348.2 L1735.8,349.5 L1736.2,347.7 L1736.6,349.4 L1737,348.5 L1737.4,349.7 L1737.8,347.8 L1738.2,347.5 L1738.6,347.8 L1739,347.8 L1739.4,349.1 L1739.8,347.6 L1740.2,346.8 L1740.6,348.4 L1741,348.1 L1741.4,348.2 L1741.8,348.4 L1742.2,348.6 L1742.6,347.1 L1743,345.9 L1743.4,346.7 L1743.8,348 L1744.2,347 L1744.6,345.7 L1745,347.6 L1745.4,345.7 L1745.8,346.8 L1746.2,344.9 L1746.6,343.9 L1747,344.5 L1747.4,344 L1747.8,344.9 L1748.2,343.2 L1748.6,343.5 L1749,343.2 L1749.4,343.5 L1749.8,344.6 L1750.2,343.6 L1750.6,343.8 L1751,344.7 L1751.4,343.9 L1751.8,344.6 L1752.2,345.6 L1752.6,342.4 L1753,343.8 L1753.4,344.2 L1753.8,342.2 L1754.2,343 L1754.6,342.7 L1755,343.3 L1755.4,342.5 L1755.8,343 L1756.2,342.5 L1756.6,342.1 L1757,342.6 L1757.4,344.7 L1757.8,341.5 L1758.2,341 L1758.6,341.6 L1759,343.4 L1759.4,342.3 L1759.8,341.7 L1760.2,342.2 L1760.6,342.1 L1761,341.7 L1761.4,341.7 L1761.8,341.2 L1762.2,339.6 L1762.6,342.2 L1763,341.7 L1763.4,341.3 L1763.8,342.8 L1764.2,345.8 L1764.6,340.9 L1765,341.6 L1765.4,341.8 L1765.8,342.1 L1766.2,342.8 L1766.6,343.2 L1767,343.1 L1767.4,342.9 L1767.8,342.6 L1768.2,342.5 L1768.6,341.4 L1769,342.2 L1769.4,342 L1769.8,341.7 L1770.2,341.2 L1770.6,342 L1771,341.1 L1771.4,342.6 L1771.8,341 L1772.2,341.4 L1772.6,341.8 L1773,341.1 L1773.4,343.1 L1773.8,342 L1774.2,340.5 L1774.6,341.7 L1775,341.9 L1775.4,340.2 L1775.8,341.7 L1776.2,341.9 L1776.6,341.9 L1777,341.2 L1777.4,341.9 L1777.8,341.9 L1778.2,342.3 L1778.6,342.2 L1779,343.2 L1779.4,340.9 L1779.8,342.1 L1780.2,338.9 L1780.6,338.6 L1781,341.4 L1781.4,344.9 L1781.8,343.1 L1782.2,343.3 L1782.6,341.8 L1783,341.5 L1783.4,341.4 L1783.8,340.3 L1784.2,343 L1784.6,343.8 L1785,342 L1785.4,343.1 L1785.8,342.2 L1786.2,341.5 L1786.6,342.7 L1787,342.2 L1787.4,342.3 L1787.8,339.8 L1788.2,339.2 L1788.6,340.1 L1789,341.4 L1789.4,341.8 L1789.8,340.3 L1790.2,340.3 L1790.6,340.2 L1791,339.5 L1791.4,339.2 L1791.8,338.4 L1792.2,340.5 L1792.6,340.1 L1793,338.3 L1793.4,340.5 L1793.8,339.7 L1794.2,339.1 L1794.6,338.3 L1795,338.3 L1795.4,337.8 L1795.8,339.2 L1796.2,337.3 L1796.6,339.4 L1797,337.9 L1797.4,337.7 L1797.8,337.2 L1798.2,342 L1798.6,338.4 L1799,338.4 L1799.4,338.6 L1799.8,337.3 L1800.2,337.9 L1800.6,338.9 L1801,339.7 L1801.4,339.5 L1801.8,337 L1802.2,338.1 L1802.6,337.6 L1803,340.7 L1803.4,338.7 L1803.8,338.6 L1804.2,337.5 L1804.6,339.2 L1805,336.9 L1805.4,337.4 L1805.8,334 L1806.2,338.2 L1806.6,338.8 L1807,337.2 L1807.4,338.1 L1807.8,336.3 L1808.2,336.5 L1808.6,336.7 L1809,340.7 L1809.4,337.8 L1809.8,337.2 L1810.2,336.5 L1810.6,336.6 L1811,337.6 L1811.4,337.9 L1811.8,338.2 L1812.2,337.7 L1812.6,337.6 L1813,337.6 L1813.4,338.3 L1813.8,336.2 L1814.2,337 L1814.6,338.1 L1815,337.9 L1815.4,337.7 L1815.8,336.4 L1816.2,338.3 L1816.6,335.1 L1817,338.4 L1817.4,337.3 L1817.8,336.1 L1818.2,337 L1818.6,337.7 L1819,336.6 L1819.4,336.8 L1819.8,337.6 L1820.2,338 L1820.6,338.5 L1821,338.6 L1821.4,338.2 L1821.8,338.7 L1822.2,336.4 L1822.6,336.6 L1823,336.9 L1823.4,339.1 L1823.8,337.2 L1824.2,337.6 L1824.6,337.4 L1825,342.1 L1825.4,339.7 L1825.8,339.8 L1826.2,338.9 L1826.6,338.5 L1827,341.6 L1827.4,337.8 L1827.8,338.4 L1828.2,338.9 L1828.6,339 L1829,338.5 L1829.4,339 L1829.8,339.7 L1830.2,339.7 L1830.6,339.4 L1831,339.2 L1831.4,340 L1831.8,340.7 L1832.2,341 L1832.6,339.2 L1833,340.6 L1833.4,339.1 L1833.8,339.9 L1834.2,340.9 L1834.6,340.4 L1835,340.1 L1835.4,338.4 L1835.8,338.8 L1836.2,335.6 L1836.6,339.3 L1837,338.7 L1837.4,338.9 L1837.8,339.2 L1838.2,339.1 L1838.6,340.4 L1839,340.7 L1839.4,340.4 L1839.8,340 L1840.2,341.2 L1840.6,341.4 L1841,341.3 L1841.4,340.2 L1841.8,339.7 L1842.2,341 L1842.6,341.1 L1843,337.9 L1843.4,338.7 L1843.8,339.7 L1844.2,341.8 L1844.6,340.7 L1845,338.7 L1845.4,339.4 L1845.8,340.7 L1846.2,339.4 L1846.6,338.3 L1847,341 L1847.4,340 L1847.8,338.3 L1848.2,338.7 L1848.6,338.1 L1849,339.8 L1849.4,340 L1849.8,338.5 L1850.2,339.2 L1850.6,339.2 L1851,339.9 L1851.4,340 L1851.8,339.6 L1852.2,340.3 L1852.6,338 L1853,340.3 L1853.4,340.3 L1853.8,338.7 L1854.2,339.3 L1854.6,338.7 L1855,338.5 L1855.4,338.9 L1855.8,340.3 L1856.2,340.5 L1856.6,338.8 L1857,341.6 L1857.4,341.5 L1857.8,339.7 L1858.2,340.7 L1858.6,338.9 L1859,339.2 L1859.4,340.4 L1859.8,340.4 L1860.2,340.8 L1860.6,340.5 L1861,341.1 L1861.4,341.1 L1861.8,340.1 L1862.2,340 L1862.6,339.2 L1863,341 L1863.4,341.3 L1863.8,339.4 L1864.2,340.9 L1864.6,340.7 L1865,339.1 L1865.4,340.8 L1865.8,341 L1866.2,340.4 L1866.6,339.7 L1867,339.7 L1867.4,339.4 L1867.8,338.9 L1868.2,340.4 L1868.6,339.4 L1869,340.3 L1869.4,339.2 L1869.8,338.5 L1870.2,338.7 L1870.6,340.9 L1871,341 L1871.4,341.4 L1871.8,340.2 L1872.2,340.1 L1872.6,342.2 L1873,340.8 L1873.4,341.4 L1873.8,340.2 L1874.2,339.9 L1874.6,339.5 L1875,340.4 L1875.4,339.6 L1875.8,339.7 L1876.2,341.4 L1876.6,340.1 L1877,341.1 L1877.4,339.5 L1877.8,340.7 L1878.2,341.8 L1878.6,339.1 L1879,342.4 L1879.4,341.8 L1879.8,341.3 L1880.2,340.9 L1880.6,339.9 L1881,339.7 L1881.4,341.5 L1881.8,341.3 L1882.2,339.8 L1882.6,339.8 L1883,340.7 L1883.4,339.8 L1883.8,338.6 L1884.2,339 L1884.6,339.2 L1885,338.6 L1885.4,341.4 L1885.8,338 L1886.2,337.6 L1886.6,338.6 L1887,338 L1887.4,339.4 L1887.8,337.7 L1888.2,340.2 L1888.6,340.4 L1889,336.7 L1889.4,340.5 L1889.8,340.1 L1890.2,341.9 L1890.6,339.8 L1891,339.6 L1891.4,339.6 L1891.8,341.2 L1892.2,339.5 L1892.6,339.4 L1893,340.8 L1893.4,340.8 L1893.8,339.9 L1894.2,339.6 L1894.6,340.8 L1895,340.1 L1895.4,341.9 L1895.8,340.7 L1896.2,341.1 L1896.6,342.1 L1897,341.2 L1897.4,342.1 L1897.8,341.9 L1898.2,341.1 L1898.6,342.4 L1899,343 L1899.4,340.9 L1899.8,342.8 L1900.2,341.1 L1900.6,340.7 L1901,341.1 L1901.4,340.4 L1901.8,342.9 L1902.2,342.4 L1902.6,341.8 L1903,342.8 L1903.4,340.3 L1903.8,341.6 L1904.2,340.8 L1904.6,343.1 L1905,342.4 L1905.4,342.4 L1905.8,342.5 L1906.2,342.6 L1906.6,340.6 L1907,340.4 L1907.4,341.6 L1907.8,341.3 L1908.2,342.8 L1908.6,341.6 L1909,343 L1909.4,342.5 L1909.8,342.2 L1910.2,340.2 L1910.6,340.9 L1911,342.6 L1911.4,340.1 L1911.8,341.7 L1912.2,341.6 L1912.6,340.8 L1913,342.9 L1913.4,341.7 L1913.8,340.9 L1914.2,342.1 L1914.6,341.3 L1915,344.1 L1915.4,340.8 L1915.8,342.5 L1916.2,342.1 L1916.6,341.8" fill="none" stroke="#007f00" stroke-width="1.15"/>
  </g>
</svg>

<!-- tabs -->
<div class="a" style="left:307px;top:541px;width:159px;height:20px;background:#efefef"></div>
<div class="a" style="left:305px;top:560px;width:1612px;height:425px;border:1px solid #f0f0f0;border-right-color:#e6e6e6;border-bottom-color:#e6e6e6"></div>
<div class="a tab" style="left:311px;top:545px;font-weight:bold;color:#000;letter-spacing:0.35px">Numerical values</div>
<div class="a tab" style="left:471px;top:545px">Speed</div>
<div class="a tab" style="left:631px;top:545px">Sway rectangle</div>
<div class="a tab" style="left:791px;top:545px">Fourier analysis</div>
<div class="a tab" style="left:951px;top:545px">Notes</div>

<!-- heatmap -->
<svg class="a" style="left:319px;top:574px" width="398" height="398">
<defs><filter id="hmA" x="0" y="0" width="398" height="398" filterUnits="userSpaceOnUse" color-interpolation-filters="sRGB"><feGaussianBlur in="SourceGraphic" stdDeviation="11" result="b0"/><feComponentTransfer in="b0" result="b"><feFuncR type="linear" slope="1.85" intercept="-0.035"/><feFuncG type="linear" slope="1.85" intercept="-0.035"/><feFuncB type="linear" slope="1.85" intercept="-0.035"/></feComponentTransfer><feComponentTransfer in="b"><feFuncR type="table" tableValues="0.000 0.043 0.048 0.054 0.060 0.065 0.071 0.077 0.082 0.090 0.104 0.118 0.132 0.174 0.218 0.204 0.175 0.157 0.139 0.122 0.104 0.088 0.071 0.054 0.037 0.019 0.001 0.000 0.000 0.000 0.000 0.000 0.000 0.000 0.000 0.000 0.000 0.000 0.000 0.000 0.000 0.000 0.000 0.000 0.000 0.000 0.000 0.000 0.000 0.000 0.000 0.000 0.000 0.020 0.095 0.170 0.245 0.320 0.394 0.468 0.542 0.616 0.672 0.725 0.778 0.844 0.939 1.000 1.000 1.000 1.000 1.000 1.000 1.000 1.000 1.000 1.000 1.000 1.000 1.000 1.000 1.000 1.000 1.000 1.000 1.000 1.000 1.000 1.000 1.000 1.000 1.000 1.000 1.000 1.000 1.000"/><feFuncG type="table" tableValues="0.000 0.000 0.000 0.000 0.000 0.000 0.000 0.000 0.000 0.000 0.000 0.000 0.000 0.000 0.000 0.059 0.135 0.203 0.271 0.339 0.407 0.463 0.518 0.572 0.640 0.718 0.796 0.761 0.720 0.684 0.662 0.640 0.618 0.584 0.544 0.504 0.471 0.449 0.427 0.435 0.476 0.517 0.554 0.583 0.613 0.642 0.677 0.732 0.788 0.838 0.881 0.925 0.968 1.000 1.000 1.000 1.000 1.000 1.000 1.000 1.000 1.000 1.000 1.000 1.000 1.000 1.000 0.989 0.958 0.928 0.898 0.862 0.819 0.776 0.733 0.695 0.656 0.618 0.581 0.546 0.511 0.476 0.449 0.422 0.394 0.366 0.337 0.308 0.278 0.254 0.233 0.212 0.191 0.170 0.148 0.125"/><feFuncB type="table" tableValues="0.000 0.142 0.168 0.195 0.221 0.247 0.273 0.300 0.326 0.368 0.452 0.536 0.620 0.708 0.797 0.822 0.831 0.842 0.854 0.865 0.877 0.893 0.909 0.926 0.942 0.957 0.972 0.901 0.825 0.757 0.713 0.669 0.625 0.562 0.492 0.422 0.354 0.288 0.223 0.181 0.165 0.150 0.136 0.125 0.114 0.103 0.095 0.098 0.101 0.097 0.088 0.079 0.070 0.059 0.044 0.029 0.014 0.000 0.000 0.000 0.000 0.000 0.000 0.000 0.000 0.000 0.000 0.000 0.000 0.000 0.000 0.000 0.000 0.000 0.000 0.000 0.000 0.000 0.000 0.000 0.000 0.000 0.000 0.000 0.000 0.000 0.000 0.000 0.000 0.000 0.000 0.000 0.000 0.000 0.000 0.000"/><feFuncA type="discrete" tableValues="1"/></feComponentTransfer></filter><filter id="hmB" x="0" y="0" width="398" height="398" filterUnits="userSpaceOnUse" color-interpolation-filters="sRGB"><feGaussianBlur in="SourceGraphic" stdDeviation="8.5" result="b0"/><feComponentTransfer in="b0" result="b"><feFuncR type="linear" slope="1.75" intercept="-0.045"/><feFuncG type="linear" slope="1.75" intercept="-0.045"/><feFuncB type="linear" slope="1.75" intercept="-0.045"/></feComponentTransfer><feComponentTransfer in="b"><feFuncR type="table" tableValues="0.000 0.043 0.048 0.054 0.060 0.065 0.071 0.077 0.082 0.090 0.104 0.118 0.132 0.174 0.218 0.204 0.175 0.157 0.139 0.122 0.104 0.088 0.071 0.054 0.037 0.019 0.001 0.000 0.000 0.000 0.000 0.000 0.000 0.000 0.000 0.000 0.000 0.000 0.000 0.000 0.000 0.000 0.000 0.000 0.000 0.000 0.000 0.000 0.000 0.000 0.000 0.000 0.000 0.020 0.095 0.170 0.245 0.320 0.394 0.468 0.542 0.616 0.672 0.725 0.778 0.844 0.939 1.000 1.000 1.000 1.000 1.000 1.000 1.000 1.000 1.000 1.000 1.000 1.000 1.000 1.000 1.000 1.000 1.000 1.000 1.000 1.000 1.000 1.000 1.000 1.000 1.000 1.000 1.000 1.000 1.000"/><feFuncG type="table" tableValues="0.000 0.000 0.000 0.000 0.000 0.000 0.000 0.000 0.000 0.000 0.000 0.000 0.000 0.000 0.000 0.059 0.135 0.203 0.271 0.339 0.407 0.463 0.518 0.572 0.640 0.718 0.796 0.761 0.720 0.684 0.662 0.640 0.618 0.584 0.544 0.504 0.471 0.449 0.427 0.435 0.476 0.517 0.554 0.583 0.613 0.642 0.677 0.732 0.788 0.838 0.881 0.925 0.968 1.000 1.000 1.000 1.000 1.000 1.000 1.000 1.000 1.000 1.000 1.000 1.000 1.000 1.000 0.989 0.958 0.928 0.898 0.862 0.819 0.776 0.733 0.695 0.656 0.618 0.581 0.546 0.511 0.476 0.449 0.422 0.394 0.366 0.337 0.308 0.278 0.254 0.233 0.212 0.191 0.170 0.148 0.125"/><feFuncB type="table" tableValues="0.000 0.142 0.168 0.195 0.221 0.247 0.273 0.300 0.326 0.368 0.452 0.536 0.620 0.708 0.797 0.822 0.831 0.842 0.854 0.865 0.877 0.893 0.909 0.926 0.942 0.957 0.972 0.901 0.825 0.757 0.713 0.669 0.625 0.562 0.492 0.422 0.354 0.288 0.223 0.181 0.165 0.150 0.136 0.125 0.114 0.103 0.095 0.098 0.101 0.097 0.088 0.079 0.070 0.059 0.044 0.029 0.014 0.000 0.000 0.000 0.000 0.000 0.000 0.000 0.000 0.000 0.000 0.000 0.000 0.000 0.000 0.000 0.000 0.000 0.000 0.000 0.000 0.000 0.000 0.000 0.000 0.000 0.000 0.000 0.000 0.000 0.000 0.000 0.000 0.000 0.000 0.000 0.000 0.000 0.000 0.000"/><feFuncA type="discrete" tableValues="1"/></feComponentTransfer></filter></defs>
<g filter="url(#hmA)"><rect x="0" y="0" width="398" height="398" fill="#000"/><g fill="#fff" stroke="#fff" stroke-linecap="round" stroke-linejoin="round"><path d="M69,200 L80,216 L94,233" fill="none" stroke-width="9" stroke-opacity="0.17"/><path d="M323,190 L307,216 L287,246" fill="none" stroke-width="20" stroke-opacity="0.1"/><ellipse cx="114.5" cy="278.5" rx="22.5" ry="26" fill-opacity="1" stroke="none" transform="rotate(0 114.5 278.5)"/><ellipse cx="261" cy="285.5" rx="19" ry="22.5" fill-opacity="1" stroke="none" transform="rotate(0 261 285.5)"/></g></g>
<g filter="url(#hmB)" style="mix-blend-mode:lighten"><rect x="0" y="0" width="398" height="398" fill="#000"/><g fill="#fff" stroke="#fff" stroke-linecap="round" stroke-linejoin="round"><ellipse cx="105.7" cy="76.8" rx="9.5" ry="9" fill-opacity="0.7" stroke="none" transform="rotate(0 105.7 76.8)"/><ellipse cx="271.8" cy="89" rx="9" ry="9" fill-opacity="0.7" stroke="none" transform="rotate(0 271.8 89)"/><path d="M41,153 L50,164 L79,150 L98,144 L119,141 L129,129 L129,120 L117,106 L98,104 L72,112 L55,126 L42,141 Z" fill-opacity="0.37" stroke="none"/><ellipse cx="105" cy="126" rx="14" ry="9" fill-opacity="0.55" stroke="none" transform="rotate(-5 105 126)"/><ellipse cx="89" cy="129" rx="10" ry="8" fill-opacity="0.2" stroke="none" transform="rotate(-5 89 129)"/><path d="M247,130 L251,116 L270,112 L301,118 L319,130 L332,148 L339,164 L336,179 L322,185 L307,179 L293,163 L275,157 L256,151 L248,142 Z" fill-opacity="0.52" stroke="none"/><ellipse cx="270" cy="136" rx="12" ry="10" fill-opacity="0.55" stroke="none" transform="rotate(0 270 136)"/><path d="M281,138 L301,148 L315,160" fill="none" stroke-width="12" stroke-opacity="0.2"/></g></g>
<line x1="0" y1="189.5" x2="398" y2="189.5" stroke="#8c8c8c" stroke-width="1"/>
<line x1="189.5" y1="0" x2="189.5" y2="398" stroke="#8c8c8c" stroke-width="1"/>
<path d="M183.6,214.7 L183.3,214.1 L182.8,213.1 L182.3,212.9 L181.8,212.9 L180.9,212.3 L180.9,212.2 L179.7,211.7 L179.3,211.7 L180.4,211.3 L181.4,210.8 L181.5,209.9 L181.9,209.2 L183.0,208.5 L182.3,208.2 L180.7,208.4 L180.9,208.2 L182.0,208.1 L183.0,208.5 L183.9,209.9 L185.6,211.8 L190.0,213.9 L192.4,214.8 L193.8,215.0 L197.5,214.5 L200.6,215.4 L202.1,215.4 L203.9,215.0 L206.3,214.9 L209.2,213.9 L210.3,213.4 L212.1,212.0 L213.8,211.5 L215.6,211.4 L215.9,211.6 L216.2,211.3 L215.5,210.5 L215.3,210.3 L215.5,210.5 L214.9,211.0 L211.9,211.7 L211.1,211.9 L208.3,213.0 L206.1,214.0 L203.9,214.5 L202.6,214.7 L201.5,215.4 L199.2,216.5 L196.2,217.9 L194.5,218.7 L190.0,220.2 L188.0,220.2 L186.3,221.5 L185.3,221.4 L183.4,220.4 L182.2,219.6 L182.4,219.1 L183.2,218.7 L183.5,218.2 L184.2,218.4 L184.6,218.0 L185.8,217.2 L186.7,216.9 L187.2,215.8 L190.0,213.8 L191.7,212.8 L192.6,212.4 L193.1,211.6 L195.7,210.7 L195.8,210.1 L195.6,209.4 L195.8,208.5 L196.8,207.3 L196.7,207.0 L196.0,206.8 L194.8,206.9 L195.1,207.4 L193.8,207.6 L193.4,207.4 L193.4,206.5 L193.0,205.9 L192.6,205.0 L191.9,204.4 L191.3,205.6 L190.7,205.2 L189.8,206.0 L188.8,205.7 L188.1,205.3 L190.6,205.6 L189.6,206.8 L191.0,205.6 L191.8,204.9 L192.4,204.0 L191.9,203.0 L192.8,202.5 L192.3,201.7 L193.2,201.4 L191.8,193.2 L191.8,193.1 L191.8,193.4 L191.8,193.6 L191.8,193.7 L191.9,194.1 L191.8,194.1 L191.6,194.5 L191.6,194.6 L191.5,194.8 L191.4,195.0 L191.4,195.2 L191.3,195.1 L191.3,195.3 L190.3,195.4 L190.1,195.6 L190.0,195.8 L190.6,196.2 L190.8,196.1 L190.4,195.8 L190.2,196.0 L191.0,196.4 L190.8,196.0 L190.7,195.5 L190.5,196.0 L190.7,196.0 L190.3,196.1 L190.7,195.9 L190.5,196.4 L191.4,195.8 L191.0,195.6 L190.9,195.6 L190.9,195.7 L190.8,195.8 L190.9,195.7 L190.9,196.2 L191.6,196.2 L191.4,196.3 L190.9,196.4 L190.7,196.7 L190.6,196.7 L191.7,196.3 L191.9,196.7 L191.5,196.4 L191.6,196.4 L191.5,195.8 L192.0,196.1 L191.5,195.9 L192.1,195.8 L191.9,196.1 L192.2,196.3 L192.1,196.6 L192.2,196.0 L192.1,195.9 L192.1,195.7 L192.1,196.2 L191.8,196.6 L191.5,196.8 L191.5,196.7 L192.1,196.2 L192.2,196.0 L192.4,195.9 L192.3,196.4 L191.8,196.8 L192.4,196.6 L192.3,196.5 L192.2,196.5 L192.1,196.2 L192.0,196.7 L192.2,196.7 L192.3,197.2 L192.3,196.7 L192.4,197.2 L192.2,196.7 L192.1,196.4 L192.1,196.7 L192.1,196.8 L192.5,196.3 L192.2,196.7 L192.7,196.8 L192.5,196.6 L192.9,196.5 L192.6,196.2 L193.2,197.1 L193.4,196.9 L193.4,196.3 L192.7,196.6 L193.2,195.9 L192.9,195.9 L193.4,196.4 L192.9,197.0 L193.5,196.4 L193.2,196.5 L193.8,196.4 L193.6,196.5 L193.1,196.4 L194.1,197.1 L194.2,196.3 L193.7,196.5 L193.1,196.6 L192.9,196.4 L193.2,196.6 L193.8,197.1 L193.7,197.0 L193.9,196.5 L193.7,196.2 L193.4,196.6 L193.6,197.1 L194.0,197.2 L194.0,196.7 L194.2,196.8 L193.9,197.1 L193.7,197.1 L193.6,197.0 L193.9,197.1 L193.9,197.5 L193.9,197.1 L194.1,197.2 L193.9,197.1 L194.5,197.0 L194.9,197.4 L194.8,197.4 L193.9,197.5 L194.2,197.2 L194.6,197.3 L194.4,197.1 L194.6,197.7 L194.2,197.0 L194.1,196.9 L194.4,196.6 L194.9,197.0 L194.4,196.9 L194.3,197.4 L194.7,197.3 L194.6,197.8 L194.7,197.5 L194.7,197.5 L194.7,197.0 L194.6,197.7 L194.8,197.7 L195.2,197.4 L195.3,197.6 L195.3,197.7 L195.3,197.5 L194.9,197.3 L195.0,197.6 L195.5,197.8 L194.8,198.4 L194.8,197.6 L195.4,197.5 L195.4,198.0 L194.6,197.4 L195.4,197.4 L194.5,198.1 L194.9,197.2 L194.6,198.1 L195.2,197.6 L195.1,197.6 L195.4,197.6 L195.5,197.8 L195.4,198.6 L195.6,198.3 L195.5,198.0 L195.8,198.3 L195.2,198.2 L195.9,197.9 L195.4,197.2 L194.8,198.2 L195.2,197.5 L195.6,197.9 L195.5,198.6 L195.6,198.4 L195.9,198.5 L195.8,198.6 L196.1,198.7 L196.1,198.5 L195.7,198.2 L196.5,198.1 L196.2,198.6 L196.6,198.5 L196.4,199.1 L196.4,198.7 L195.7,198.0 L196.2,197.9 L196.2,198.5 L195.9,198.8 L195.9,198.9 L196.4,198.7 L195.4,198.5 L195.9,198.8 L195.7,199.0 L195.7,199.2 L195.7,199.2 L195.3,198.6 L195.7,198.8 L195.7,199.0 L195.3,199.3 L195.8,199.5 L195.6,199.0 L196.0,199.3 L196.1,199.5 L195.2,199.4 L195.8,199.1 L196.1,199.4 L195.9,198.8 L196.4,199.2 L196.6,199.3 L196.1,198.9 L195.9,199.7 L196.2,199.3 L196.5,199.4 L196.3,199.6 L195.8,199.8 L195.9,199.8 L196.3,200.0 L196.2,199.4 L196.0,199.2 L196.2,199.8 L195.9,199.6 L196.3,200.1 L195.9,200.3 L196.1,200.2 L196.2,199.7 L195.3,199.9 L195.7,200.0 L195.6,200.0 L195.5,200.2 L195.7,200.5 L195.6,199.9 L195.6,200.1 L195.6,200.2 L195.8,200.8 L196.1,200.6 L195.7,200.5 L195.4,201.0 L195.0,200.5 L195.3,200.8 L195.4,200.6 L195.2,200.4 L195.1,200.4 L195.6,200.4 L195.1,200.7 L195.6,200.5 L195.7,200.9 L195.7,200.7 L196.0,201.2 L195.8,200.4 L195.9,200.4 L195.6,200.4 L195.3,200.7 L195.5,200.8 L195.7,200.9 L196.0,201.0 L195.3,201.0 L195.0,200.6 L195.6,201.1 L195.7,200.9 L195.7,201.0 L195.9,201.0 L195.1,201.1 L195.1,200.9 L195.4,200.3 L195.3,200.4 L194.9,201.2 L194.5,201.0 L194.4,200.9 L195.2,201.1 L195.3,201.0 L195.6,201.1 L195.0,201.3 L194.7,200.9 L195.2,201.6 L195.1,201.4 L194.8,201.9 L195.3,201.5 L195.1,201.8 L194.8,201.8 L194.3,201.9 L195.1,201.6 L194.3,201.8 L194.8,201.4 L194.8,201.7 L195.2,201.8 L195.1,202.2 L195.1,202.2 L195.3,201.9 L195.5,202.2 L195.8,202.3 L195.9,202.3 L195.8,202.3 L196.2,202.6 L196.1,202.9 L196.3,203.0 L196.1,203.3 L196.5,203.4 L196.6,203.4 L196.4,203.4 L196.4,203.3 L196.3,203.0 L196.2,202.7 L195.7,202.9 L195.5,202.5 L195.3,202.4 L195.4,202.3 L195.5,202.1 L195.3,202.0 L195.3,201.8 L194.9,201.7 L194.8,201.9 L194.8,201.7 L194.1,200.6 L194.2,200.7 L193.9,200.4 L193.6,200.2 L193.7,200.1 L194.3,200.4 L193.7,200.5 L193.3,200.6 L193.2,200.8 L193.5,200.8 L193.0,200.7 L192.8,200.7 L193.2,200.7 L192.9,200.7 L192.9,201.0 L193.2,200.6 L193.0,200.3 L192.7,200.0 L192.9,200.9 L193.0,200.5 L192.7,200.1 L192.5,200.4 L192.1,200.4 L192.5,200.6 L192.3,200.6 L192.5,200.4 L192.5,200.4 L192.4,200.7 L192.2,200.7 L191.8,200.8 L192.3,200.4 L192.3,200.6 L192.7,201.1 L192.6,200.7 L192.9,200.9 L192.8,200.7 L193.0,201.2 L192.8,201.2 L193.1,200.8 L192.8,200.9 L193.2,201.1 L193.0,201.3 L193.7,201.4 L193.6,201.3 L193.2,201.5 L193.6,201.2 L193.9,200.8 L194.2,201.0 L193.9,201.3 L194.3,201.4 L194.4,201.2 L193.8,200.8 L194.4,201.1 L194.6,201.2 L194.2,203.4 L193.0,205.1 L193.3,206.6" fill="none" stroke="#fff" stroke-width="1.3"/>
<path d="M185.5,185.5 L193.5,193.5 M193.5,185.5 L185.5,193.5" stroke="#4cc8f0" stroke-width="1.2"/><circle cx="190" cy="189.8" r="3" fill="#5ccbf2"/>
</svg>
<div class="a st" style="left:326px;top:576px;font-size:11px;color:#9a9a9a;letter-spacing:-0.1px">Time: 51,2 sec</div>
<div class="a st" style="left:326px;top:590px;font-size:11px;color:#9a9a9a;letter-spacing:-0.1px">Frames: 2221</div>
<div class="a st" style="left:326px;top:604px;font-size:11px;color:#9a9a9a;letter-spacing:-0.1px">Freq: 43Hz</div>

<!-- numerical values panel -->
<div class="a" style="left:745px;top:577px;width:18px;height:108px;background:#efefef;border-radius:3px 0 0 3px"></div>
<div class="a st" style="left:747px;top:583px;font-size:11px;font-weight:bold;color:#000;writing-mode:vertical-rl;letter-spacing:0px">Numerical values</div>
<div class="a st" style="left:747px;top:692px;font-size:11px;color:#f0f0f0;writing-mode:vertical-rl;letter-spacing:-0.2px">Avg. Value</div>
<div class="a" style="left:762px;top:575px;width:260px;height:396px;background:#c0c0c0;border-top:1px solid #e0e0e0;border-right:1px solid #f4f4f4;border-bottom:1px solid #f4f4f4"></div>
<div class="a st" style="left:766px;top:579px;width:260px;text-align:center;font-size:11px;font-weight:bold;color:#000;letter-spacing:0.2px">Bipodalic OE - 51,2 sec.</div>
<div class="a lbl" style="left:770px;top:596.4px">Sway length mm</div>
<div class="vb" style="top:594px">890,96</div>
<div class="a lbl" style="left:770px;top:615.4px">Ellipse surface mm²</div>
<div class="vb" style="top:613px">162,58</div>
<div class="a lbl" style="left:770px;top:634.4px">Ellipse inclination °</div>
<div class="vb" style="top:632px">124</div>
<div class="a lbl" style="left:770px;top:653.4px">Ellipse eccentricity°</div>
<div class="vb" style="top:651px">0,49</div>
<div class="a lbl" style="left:770px;top:672.4px">L/S ratio</div>
<div class="vb" style="top:670px">5,48</div>
<div class="a lbl" style="left:770px;top:691.4px">Delta X mm</div>
<div class="vb" style="top:689px">37,32</div>
<div class="a lbl" style="left:770px;top:710.4px">Delta Y mm</div>
<div class="vb" style="top:708px">28,82</div>
<div class="a lbl" style="left:770px;top:729.4px">Major axis mm</div>
<div class="vb" style="top:727px">15,42</div>
<div class="a lbl" style="left:770px;top:748.4px">Minor axis mm</div>
<div class="vb" style="top:746px">13,42</div>
<div class="a lbl" style="left:770px;top:767.4px">Max oscillation mm</div>
<div class="vb" style="top:765px">3,70</div>
<div class="a lbl" style="left:770px;top:786.4px">Min oscillation mm</div>
<div class="vb" style="top:784px">0,00</div>

<!-- notes box -->
<div class="a" style="left:1035px;top:574px;width:871px;height:198px;background:#fff;border-top:1px solid #6a6a6a;border-left:1px solid #6a6a6a;border-bottom:1px solid #6a6a6a"></div>
<div class="a" style="left:1889px;top:575px;width:16px;height:196px;background:#efefef"></div>
<svg class="a" style="left:1889px;top:575px" width="16" height="196">
  <path d="M4.5,12 L8,8.5 L11.5,12" fill="none" stroke="#b4b4b4" stroke-width="1.6"/>
  <path d="M4.5,185 L8,188.5 L11.5,185" fill="none" stroke="#b4b4b4" stroke-width="1.6"/>
</svg>

<!-- player controls -->
<div class="a" style="left:305px;top:994px;width:320px;height:34px;border:1px solid #ececec"></div>
<div class="pb" style="left:312px">&gt;</div>
<div class="pb" style="left:336px">||</div>
<div class="pb" style="left:360px;font-size:12px">G</div>
<div class="pb" style="left:385px">|&lt;</div>
<div class="pb" style="left:409px">&lt;&lt;</div>
<div class="pb" style="left:433px">&gt;&gt;</div>
<div class="pb" style="left:457px">&gt;|</div>
<div class="a st" style="left:496px;top:998px;width:121px;text-align:center;font-size:11px;color:#000">Global</div>
<div class="a" style="left:495px;top:1014px;width:122px;height:11px;background:#0a78d6;border:1px solid #e8e8e8"></div>

<!-- selectors -->
<div class="a" style="left:806px;top:992px;width:847px;height:21px;background:#fff;border:1px solid #9a9a9a"></div>
<div class="a st" style="left:811px;top:997px;font-size:11px;color:#000;letter-spacing:-0.1px">Bipodalic OE - 51,2 sec.</div>
<div class="a" style="left:806px;top:1013px;width:847px;height:21px;background:#fff;border:1px solid #9a9a9a"></div>
<div class="a st" style="left:811px;top:1018px;font-size:11px;color:#6d6d6d;letter-spacing:-0.1px">Bipodalic CE - 51,2 sec.</div>
<svg class="a" style="left:1636px;top:992px" width="40" height="44">
  <path d="M3.5,7.5 L8,12 L12.5,7.5" fill="none" stroke="#303030" stroke-width="1.1"/>
  <path d="M3.5,28.5 L8,33 L12.5,28.5" fill="none" stroke="#b0b0b0" stroke-width="1.1"/>
  <rect x="17.5" y="0.5" width="16" height="20" fill="#007f00" stroke="#e4e4e4" stroke-width="1.3"/>
  <rect x="17.5" y="21.5" width="16" height="20" fill="#ff0000" stroke="#e4e4e4" stroke-width="1.3"/>
</svg>
<div class="a" style="left:1678px;top:1007px;width:13px;height:13px;background:#fff;border:1px solid #333"></div>
<div class="a st" style="left:1694px;top:1008px;font-size:11px;color:#000;letter-spacing:-0.1px">Combined</div>
<div class="a" style="left:1775px;top:1007px;width:143px;height:32px;background:#e1e1e1;border:1px solid #f4f4f4;border-bottom:none"></div>
<div class="a" style="left:1900px;top:1011px;width:1px;height:26px;background:#a8a8a8"></div>
<svg class="a" style="left:1905px;top:1021px" width="10" height="7"><path d="M0,0 L9,0 L4.5,5.5 Z" fill="#000"/></svg>
<div class="a st" style="left:1775px;top:1017px;width:125px;text-align:center;font-size:13px;font-weight:bold;color:#000;letter-spacing:0.2px">Raw Data</div>
</body></html>
